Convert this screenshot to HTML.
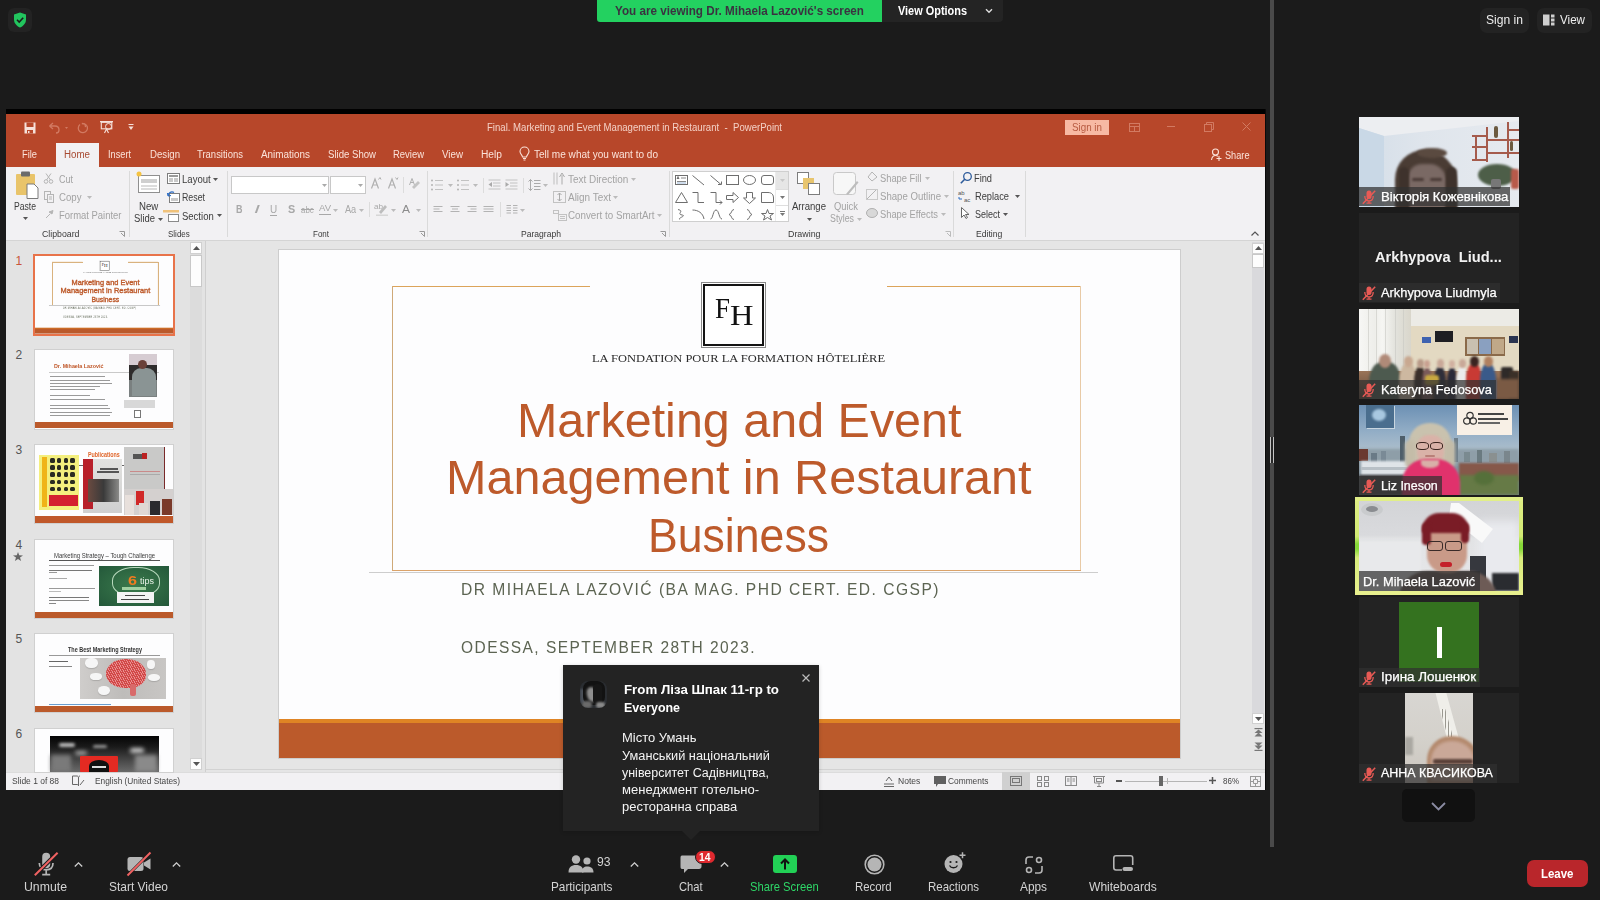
<!DOCTYPE html>
<html><head><meta charset="utf-8">
<style>
*{margin:0;padding:0;box-sizing:border-box}
html,body{width:1600px;height:900px;overflow:hidden;background:#1b1b1b;font-family:"Liberation Sans",sans-serif}
.a{position:absolute}
.t{position:absolute;white-space:nowrap;line-height:1;transform-origin:0 50%}
svg{position:absolute;overflow:visible}
#slclone .t[style*="189, 90, 43"],#slclone .t[style*="#bd5a2b"]{-webkit-text-stroke:2.4px currentColor}
/* ribbon text */
.rb{font-size:10px;color:#3b3b3b}
.rd{font-size:10px;color:#a6a6a6}
.lab{font-size:9.5px;color:#454545}
.sep{position:absolute;width:1px;background:#dcdcdc;top:171px;height:66px}
.tab{font-size:10px;color:#fbe3da}
.zl{font-size:12.5px;color:#d2d2d2}
.nm{font-size:12px;color:#fff}
.tile{position:absolute;left:1359px;width:160px;height:90px;background:#242424;overflow:hidden}
.lbl{position:absolute;left:0;bottom:0;height:19px;background:rgba(30,30,30,.78)}
</style></head><body>
<!-- ===== Zoom top chrome ===== -->
<div class="a" style="left:8px;top:8px;width:24px;height:24px;border-radius:6px;background:#232323"></div>
<svg style="left:13px;top:12px" width="14" height="16" viewBox="0 0 14 16"><path d="M7 0.5 L13 2.6 V7.5 C13 11.3 10.4 14 7 15.5 C3.6 14 1 11.3 1 7.5 V2.6 Z" fill="#22c55e"></path><path d="M4 7.8 L6.2 10 L10.2 5.8" stroke="#1b1b1b" stroke-width="1.6" fill="none"></path></svg>

<div class="a" style="left:597px;top:0;width:285px;height:22px;background:#23d160;border-radius:0 0 0 3px"></div>
<div class="t fit" style="left: 615px; top: 5px; font-size: 12.5px; font-weight: 700; color: rgb(58, 51, 64); --w: 249; transform: scaleX(0.933458);">You are viewing Dr. Mihaela Lazović's screen</div>
<div class="a" style="left:882px;top:0;width:121px;height:22px;background:#242424;border-radius:0 0 4px 0"></div>
<div class="t fit" style="left: 898px; top: 5px; font-size: 12px; font-weight: 700; color: rgb(255, 255, 255); --w: 69; transform: scaleX(0.910328);">View Options</div>
<svg style="left:985px;top:8px" width="8" height="6" viewBox="0 0 8 6"><path d="M1 1.2 L4 4.2 L7 1.2" stroke="#ddd" stroke-width="1.4" fill="none"></path></svg>

<div class="a" style="left:1480px;top:8px;width:49px;height:25px;background:#232323;border-radius:7px"></div>
<div class="t fit" style="left: 1486px; top: 14px; font-size: 12.5px; color: rgb(238, 238, 238); --w: 37; transform: scaleX(0.967716);">Sign in</div>
<div class="a" style="left:1537px;top:8px;width:55px;height:25px;background:#232323;border-radius:7px"></div>
<svg style="left:1543px;top:14px" width="12" height="12" viewBox="0 0 12 12"><rect x="0" y="0.5" width="6.5" height="11" fill="#cfcfcf"></rect><rect x="8" y="0.5" width="3.5" height="3" fill="#cfcfcf"></rect><rect x="8" y="4.5" width="3.5" height="3" fill="#cfcfcf"></rect><rect x="8" y="8.5" width="3.5" height="3" fill="#cfcfcf"></rect></svg>
<div class="t fit" style="left: 1560px; top: 14px; font-size: 12.5px; color: rgb(238, 238, 238); --w: 25; transform: scaleX(0.930233);">View</div>

<div class="a" style="left:1270px;top:0;width:4px;height:847px;background:#4a4a4a"></div>
<div class="a" style="left:1270px;top:437px;width:4px;height:26px;background:#262626;border-left:1px solid #c4c4c4;border-right:1px solid #c4c4c4"></div>
<div class="a" style="left:1265px;top:109px;width:1px;height:681px;background:#0a0a0a"></div>

<!-- ===== PowerPoint window ===== -->
<div class="a" style="left:6px;top:109px;width:1259px;height:5px;background:#000"></div>
<div class="a" style="left:6px;top:114px;width:1259px;height:53px;background:#b7472a"></div>
<div class="a" style="left:6px;top:167px;width:1259px;height:73px;background:#f2f1f3"></div>
<div class="a" style="left:6px;top:240px;width:1259px;height:1px;background:#d4d4d4"></div>
<div class="a" style="left:6px;top:241px;width:199px;height:531px;background:#e3e3e3"></div>
<div class="a" style="left:205px;top:241px;width:1px;height:531px;background:#cfcfcf"></div>
<div class="a" style="left:206px;top:241px;width:1059px;height:531px;background:#e5e5e5"></div>
<div class="a" style="left:6px;top:772px;width:1259px;height:18px;background:#f2f1f3;border-top:1px solid #dcdcdc"></div>

<!-- QAT -->
<svg style="left:24px;top:122px" width="12" height="12" viewBox="0 0 12 12"><rect x="0.5" y="0.5" width="11" height="11" fill="#f6e1da"></rect><rect x="2.5" y="0.5" width="7" height="4.5" fill="#b7472a"></rect><rect x="3" y="8" width="6" height="3.5" fill="#b7472a"></rect><rect x="4" y="9" width="1.5" height="2" fill="#f6e1da"></rect></svg>
<svg style="left:48px;top:122px" width="20" height="12" viewBox="0 0 20 12"><path d="M1.5 4 L5 1 M1.5 4 L5 7 M1.5 4 H7 C10 4 11 6 11 8 C11 10 9.5 11 8 11" stroke="#d27a62" stroke-width="1.3" fill="none"></path><path d="M17 5 L20 5 L18.5 7Z" fill="#d27a62"></path></svg>
<svg style="left:77px;top:122px" width="12" height="12" viewBox="0 0 12 12"><path d="M3 2.5 A4.6 4.6 0 1 0 8 2 M8 2 L8.5 5.2 M8 2 L4.8 1.5" stroke="#d27a62" stroke-width="1.3" fill="none"></path></svg>
<svg style="left:100px;top:121px" width="14" height="13" viewBox="0 0 14 13"><rect x="0" y="0" width="13" height="1.3" fill="#f6e1da"></rect><rect x="1.3" y="1.3" width="10.5" height="6.5" fill="none" stroke="#f6e1da" stroke-width="1.1"></rect><circle cx="8.5" cy="5.5" r="3" fill="none" stroke="#f6e1da" stroke-width="1"></circle><path d="M6.5 8 L4.5 12 M6.5 8 L8.5 12" stroke="#f6e1da" stroke-width="1.1"></path></svg>
<svg style="left:128px;top:124px" width="6" height="7" viewBox="0 0 6 7"><rect x="0.5" y="0" width="5" height="1" fill="#f6e1da"></rect><path d="M0.5 2.5 H5.5 L3 6Z" fill="#f6e1da"></path></svg>
<div class="t fit" style="left: 487px; top: 123px; font-size: 10px; color: rgb(244, 209, 198); --w: 295; transform: scaleX(0.957987);">Final. Marketing and Event Management in Restaurant&nbsp; -&nbsp; PowerPoint</div>
<div class="a" style="left:1065px;top:120px;width:44px;height:15px;background:#f7b9a3"></div>
<div class="t fit" style="left: 1072px; top: 123px; font-size: 10px; color: rgb(183, 90, 64); --w: 30; transform: scaleX(0.981094);">Sign in</div>
<svg style="left:1129px;top:123px" width="11" height="9" viewBox="0 0 11 9"><rect x="0.5" y="0.5" width="10" height="8" fill="none" stroke="#d27a62"></rect><path d="M0.5 3.5 H10.5 M5.5 3.5 V8.5" stroke="#d27a62"></path></svg>
<div class="a" style="left:1167px;top:126px;width:8px;height:1px;background:#d27a62"></div>
<svg style="left:1204px;top:122px" width="10" height="10" viewBox="0 0 10 10"><rect x="0.5" y="2.5" width="7" height="7" fill="none" stroke="#d27a62"></rect><path d="M2.5 2.5 V0.5 H9.5 V7.5 H7.5" stroke="#d27a62" fill="none"></path></svg>
<svg style="left:1242px;top:122px" width="9" height="9" viewBox="0 0 9 9"><path d="M0.5 0.5 L8.5 8.5 M8.5 0.5 L0.5 8.5" stroke="#d27a62"></path></svg>
<!-- tabs -->
<div class="a" style="left:56px;top:143px;width:43px;height:24px;background:#f2f1f3"></div>
<div class="t tab fit" style="left: 22px; top: 150px; --w: 15; transform: scaleX(0.930233);">File</div>
<div class="t tab fit" style="left: 64px; top: 150px; color: rgb(168, 74, 50); --w: 26; transform: scaleX(0.974239);">Home</div>
<div class="t tab fit" style="left: 108px; top: 150px; --w: 23; transform: scaleX(0.919425);">Insert</div>
<div class="t tab fit" style="left: 150px; top: 150px; --w: 30; transform: scaleX(0.963372);">Design</div>
<div class="t tab fit" style="left: 197px; top: 150px; --w: 46; transform: scaleX(0.947538);">Transitions</div>
<div class="t tab fit" style="left: 261px; top: 150px; --w: 49; transform: scaleX(0.990524);">Animations</div>
<div class="t tab fit" style="left: 328px; top: 150px; --w: 48; transform: scaleX(0.9594);">Slide Show</div>
<div class="t tab fit" style="left: 393px; top: 150px; --w: 31; transform: scaleX(0.945212);">Review</div>
<div class="t tab fit" style="left: 442px; top: 150px; --w: 21; transform: scaleX(0.976744);">View</div>
<div class="t tab fit" style="left: 481px; top: 150px; --w: 21; transform: scaleX(1.0205);">Help</div>
<svg style="left:519px;top:147px" width="11" height="14" viewBox="0 0 11 14"><path d="M3.5 10 C3.5 8 1 7 1 4.5 A4.5 4.5 0 0 1 10 4.5 C10 7 7.5 8 7.5 10 Z" fill="none" stroke="#fbe3da" stroke-width="1.1"></path><path d="M4 11.5 H7 M4.5 13 H6.5" stroke="#fbe3da"></path></svg>
<div class="t tab fit" style="left: 534px; top: 150px; --w: 124; transform: scaleX(1.00481);">Tell me what you want to do</div>
<svg style="left:1211px;top:148px" width="11" height="13" viewBox="0 0 11 13"><circle cx="4.5" cy="4" r="3" fill="none" stroke="#fbe3da" stroke-width="1.1"></circle><path d="M0.5 12 C1 8.5 3 7.5 4.5 7.5 C5.5 7.5 6.3 7.8 7 8.2" fill="none" stroke="#fbe3da" stroke-width="1.1"></path><path d="M8 8 V13 M5.5 10.5 H10.5" stroke="#fbe3da" stroke-width="1.1"></path></svg>
<div class="t tab fit" style="left: 1225px; top: 151px; --w: 24.5; transform: scaleX(0.918033);">Share</div>

<!--RIBBON-->
<div class="a" style="left:129px;top:171px;width:1px;height:66px;background:#dadada;"></div>
<div class="a" style="left:227px;top:171px;width:1px;height:66px;background:#dadada;"></div>
<div class="a" style="left:427px;top:171px;width:1px;height:66px;background:#dadada;"></div>
<div class="a" style="left:669px;top:171px;width:1px;height:66px;background:#dadada;"></div>
<div class="a" style="left:953px;top:171px;width:1px;height:66px;background:#dadada;"></div>
<div class="a" style="left:1025px;top:171px;width:1px;height:66px;background:#dadada;"></div>
<svg style="left:15px;top:171px" width="24" height="28" viewBox="0 0 24 28"><rect x="1" y="3" width="19" height="21" rx="1" fill="#e9c46a"></rect><rect x="6" y="0.5" width="9" height="5" rx="1" fill="#6b6b6b"></rect><path d="M12 13 H19 L23 17 V27.5 H12Z" fill="#fff" stroke="#7a7a7a" stroke-width="1"></path></svg>
<div class="t fit" style="left: 14px; top: 201.84px; font-size: 10px; color: rgb(60, 60, 60); --w: 22; transform: scaleX(0.86011);">Paste</div>
<svg style="left:22.5px;top:216.5px" width="5" height="3" viewBox="0 0 5 3"><path d="M0 0 H5 L2.5 3Z" fill="#555"></path></svg>
<svg style="left:44px;top:173px" width="9" height="11" viewBox="0 0 9 11"><circle cx="2" cy="8.5" r="1.8" fill="none" stroke="#b5b5b5"></circle><circle cx="7" cy="8.5" r="1.8" fill="none" stroke="#b5b5b5"></circle><path d="M2.5 7 L7 0.5 M6.5 7 L2 0.5" stroke="#b5b5b5"></path></svg>
<div class="t fit" style="left: 58.5px; top: 174.84px; font-size: 10px; color: rgb(163, 163, 163); --w: 14; transform: scaleX(0.899598);">Cut</div>
<svg style="left:44px;top:191px" width="10" height="12" viewBox="0 0 10 12"><rect x="0.5" y="0.5" width="6" height="8" fill="none" stroke="#b5b5b5"></rect><rect x="3.5" y="3.5" width="6" height="8" fill="#f2f1f3" stroke="#b5b5b5"></rect><path d="M5 6 H8 M5 8 H8" stroke="#b5b5b5"></path></svg>
<div class="t fit" style="left: 58.5px; top: 192.84px; font-size: 10px; color: rgb(163, 163, 163); --w: 22.5; transform: scaleX(0.963211);">Copy</div>
<svg style="left:86.5px;top:195.5px" width="5" height="3" viewBox="0 0 5 3"><path d="M0 0 H5 L2.5 3Z" fill="#bbb"></path></svg>
<svg style="left:45px;top:210px" width="9" height="9" viewBox="0 0 9 9"><path d="M1 8 L5 4 M4 2 L8 0.5 L7 4 Z" stroke="#b5b5b5" fill="#b5b5b5"></path></svg>
<div class="t fit" style="left: 58.5px; top: 211.34px; font-size: 10px; color: rgb(163, 163, 163); --w: 62.5; transform: scaleX(0.944956);">Format Painter</div>
<div class="t fit" style="left: 41.5px; top: 229.98px; font-size: 9px; color: rgb(58, 58, 58); --w: 37.5; transform: scaleX(0.973236);">Clipboard</div>
<svg style="left:119px;top:231px" width="6" height="6" viewBox="0 0 6 6"><path d="M0.5 0.5 H5.5 V5.5 M5.5 5.5 L2 2" stroke="#999" fill="none"></path></svg>
<svg style="left:136px;top:171px" width="25" height="23" viewBox="0 0 25 23"><rect x="2.5" y="4.5" width="21" height="17" fill="#fff" stroke="#8f8f8f"></rect><rect x="5" y="8" width="16" height="4" fill="#cfcfcf"></rect><path d="M5 15 H21 M5 18 H21" stroke="#b9b9b9"></path><circle cx="3" cy="3" r="2.5" fill="#f5c342"></circle></svg>
<div class="t fit" style="left: 138.7px; top: 201.84px; font-size: 10px; color: rgb(60, 60, 60); --w: 19.3; transform: scaleX(0.964247);">New</div>
<div class="t fit" style="left: 134px; top: 214.34px; font-size: 10px; color: rgb(60, 60, 60); --w: 21; transform: scaleX(0.94382);">Slide</div>
<svg style="left:158.0px;top:217.5px" width="5" height="3" viewBox="0 0 5 3"><path d="M0 0 H5 L2.5 3Z" fill="#555"></path></svg>
<svg style="left:167px;top:173px" width="13" height="11" viewBox="0 0 13 11"><rect x="0.5" y="0.5" width="12" height="10" fill="#fff" stroke="#7d7d7d"></rect><rect x="2" y="2" width="9" height="2" fill="#9a9a9a"></rect><rect x="2" y="5" width="4" height="4" fill="#c9c9c9"></rect><rect x="7" y="5" width="4" height="4" fill="#c9c9c9"></rect></svg>
<div class="t fit" style="left: 182px; top: 174.84px; font-size: 10px; color: rgb(60, 60, 60); --w: 28.7; transform: scaleX(0.955671);">Layout</div>
<svg style="left:212.5px;top:177.5px" width="5" height="3" viewBox="0 0 5 3"><path d="M0 0 H5 L2.5 3Z" fill="#555"></path></svg>
<svg style="left:167px;top:191px" width="13" height="12" viewBox="0 0 13 12"><rect x="2.5" y="2.5" width="10" height="9" fill="#fff" stroke="#7d7d7d"></rect><rect x="4" y="7" width="7" height="3" fill="#c9c9c9"></rect><path d="M1 5 A4 4 0 0 1 7 1.5 M1 5 L0.5 2 M1 5 L4 4.5" stroke="#2b6cc4" stroke-width="1.2" fill="none"></path></svg>
<div class="t fit" style="left: 182px; top: 193.14px; font-size: 10px; color: rgb(60, 60, 60); --w: 23; transform: scaleX(0.880383);">Reset</div>
<svg style="left:163px;top:209px" width="17" height="13" viewBox="0 0 17 13"><rect x="0" y="1" width="16" height="2.5" fill="#f0c27a"></rect><rect x="5.5" y="5.5" width="10" height="7" fill="#fff" stroke="#8a8a8a"></rect></svg>
<div class="t fit" style="left: 182px; top: 211.53px; font-size: 10px; color: rgb(60, 60, 60); --w: 31.7; transform: scaleX(0.950258);">Section</div>
<svg style="left:216.5px;top:213.5px" width="5" height="3" viewBox="0 0 5 3"><path d="M0 0 H5 L2.5 3Z" fill="#555"></path></svg>
<div class="t fit" style="left: 167.5px; top: 229.98px; font-size: 9px; color: rgb(58, 58, 58); --w: 21.8; transform: scaleX(0.889229);">Slides</div>
<div class="a" style="left:231px;top:176px;width:98px;height:18px;background:#fff;border:1px solid #c8c8c8"></div>
<div class="a" style="left:330px;top:176px;width:36px;height:18px;background:#fff;border:1px solid #c8c8c8"></div>
<svg style="left:322.0px;top:183.5px" width="5" height="3" viewBox="0 0 5 3"><path d="M0 0 H5 L2.5 3Z" fill="#aaa"></path></svg>
<svg style="left:358.0px;top:183.5px" width="5" height="3" viewBox="0 0 5 3"><path d="M0 0 H5 L2.5 3Z" fill="#aaa"></path></svg>
<svg style="left:371px;top:177px" width="10" height="12" viewBox="0 0 10 12"><path d="M0.5 11.5 L4 2 L7.5 11.5 M2 8 H6" stroke="#b0b0b0" stroke-width="1.2" fill="none"></path><path d="M7.5 2.5 L9 0.5 L10 2.5" stroke="#b0b0b0" fill="none"></path></svg>
<svg style="left:388px;top:177px" width="10" height="12" viewBox="0 0 10 12"><path d="M0.5 11.5 L4 2 L7.5 11.5 M2 8 H6" stroke="#b0b0b0" stroke-width="1.2" fill="none"></path><path d="M7.5 0.5 L9 2.5 L10 0.5" stroke="#b0b0b0" fill="none"></path></svg>
<div class="a" style="left:403px;top:177px;width:1px;height:16px;background:#dcdcdc;"></div>
<svg style="left:409px;top:178px" width="12" height="12" viewBox="0 0 12 12"><path d="M0.5 7 L3 0.5 L5.5 7 M1.5 4.5 H4.5" stroke="#b0b0b0" fill="none"></path><path d="M5 11 L11 5 L9 3 L3 9Z" fill="#c4c4c4"></path></svg>
<div class="t fit" style="left: 235.7px; top: 205.34px; font-size: 10px; color: rgb(168, 168, 168); font-weight: 700; --w: 6.5; transform: scaleX(0.898488);">B</div>
<div class="t fit" style="left: 253.5px; top: 205.34px; font-size: 10px; color: rgb(168, 168, 168); --w: 6; font-style: italic; transform: scaleX(2.1573);">I</div>
<div class="t fit" style="left: 269.5px; top: 205.34px; font-size: 10px; color: rgb(168, 168, 168); --w: 7.2; transform: scaleX(0.995248);">U</div>
<div class="a" style="left:269.5px;top:215px;width:7.5px;height:1px;background:#a8a8a8;"></div>
<div class="t fit" style="left: 287.5px; top: 205.34px; font-size: 10px; color: rgb(168, 168, 168); font-weight: 700; --w: 7.2; transform: scaleX(1.07916);">S</div>
<div class="t fit" style="left: 301px; top: 206.18px; font-size: 9px; color: rgb(168, 168, 168); --w: 12.7; transform: scaleX(0.874919);">abc</div>
<div class="a" style="left:301px;top:209px;width:13px;height:1px;background:#a8a8a8;"></div>
<div class="t fit" style="left: 319px; top: 204.18px; font-size: 9px; color: rgb(168, 168, 168); --w: 12; transform: scaleX(1.05785);">AV</div>
<div class="a" style="left:319px;top:214px;width:12px;height:1px;background:#a8a8a8;"></div>
<svg style="left:333.0px;top:208.5px" width="5" height="3" viewBox="0 0 5 3"><path d="M0 0 H5 L2.5 3Z" fill="#bbb"></path></svg>
<div class="t fit" style="left: 344.5px; top: 205.34px; font-size: 10px; color: rgb(168, 168, 168); --w: 11.2; transform: scaleX(0.915453);">Aa</div>
<svg style="left:358.5px;top:208.5px" width="5" height="3" viewBox="0 0 5 3"><path d="M0 0 H5 L2.5 3Z" fill="#bbb"></path></svg>
<div class="a" style="left:368.5px;top:202px;width:1px;height:15px;background:#dcdcdc;"></div>
<div class="t fit" style="left: 373.5px; top: 203.03px; font-size: 8px; color: rgb(168, 168, 168); --w: 9; transform: scaleX(1.01053);">ab</div>
<svg style="left:376px;top:203px" width="12" height="13" viewBox="0 0 12 13"><path d="M3 9 L9 2 L11 4 L5 11Z" fill="#bdbdbd"></path><rect x="0" y="11.5" width="12" height="1.5" fill="#d6d6d6"></rect></svg>
<svg style="left:390.5px;top:208.5px" width="5" height="3" viewBox="0 0 5 3"><path d="M0 0 H5 L2.5 3Z" fill="#bbb"></path></svg>
<div class="t fit" style="left: 401.8px; top: 203.99px; font-size: 11px; color: rgb(140, 140, 140); --w: 8; transform: scaleX(1.08936);">A</div>
<svg style="left:415.5px;top:208.5px" width="5" height="3" viewBox="0 0 5 3"><path d="M0 0 H5 L2.5 3Z" fill="#bbb"></path></svg>
<div class="t fit" style="left: 312.7px; top: 229.98px; font-size: 9px; color: rgb(58, 58, 58); --w: 16; transform: scaleX(0.888118);">Font</div>
<svg style="left:419px;top:231px" width="6" height="6" viewBox="0 0 6 6"><path d="M0.5 0.5 H5.5 V5.5 M5.5 5.5 L2 2" stroke="#999" fill="none"></path></svg>
<svg style="left:431px;top:179px" width="13" height="12" viewBox="0 0 13 12"><circle cx="1" cy="1.5" r="1" fill="#b3b3b3"></circle><circle cx="1" cy="6" r="1" fill="#b3b3b3"></circle><circle cx="1" cy="10.5" r="1" fill="#b3b3b3"></circle><path d="M4 1.5 H12 M4 6 H12 M4 10.5 H12" stroke="#c2c2c2"></path></svg>
<svg style="left:447.5px;top:183.5px" width="5" height="3" viewBox="0 0 5 3"><path d="M0 0 H5 L2.5 3Z" fill="#bbb"></path></svg>
<svg style="left:457px;top:179px" width="13" height="12" viewBox="0 0 13 12"><circle cx="1" cy="1.5" r="1" fill="#b3b3b3"></circle><circle cx="1" cy="6" r="1" fill="#b3b3b3"></circle><circle cx="1" cy="10.5" r="1" fill="#b3b3b3"></circle><path d="M4 1.5 H12 M4 6 H12 M4 10.5 H12" stroke="#c2c2c2"></path></svg>
<svg style="left:473.0px;top:183.5px" width="5" height="3" viewBox="0 0 5 3"><path d="M0 0 H5 L2.5 3Z" fill="#bbb"></path></svg>
<div class="a" style="left:483px;top:178px;width:1px;height:15px;background:#dcdcdc;"></div>
<svg style="left:488px;top:179px" width="13" height="11" viewBox="0 0 13 11"><path d="M0.5 1 H12.5 M5 4 H12.5 M5 7 H12.5 M0.5 10 H12.5" stroke="#c2c2c2"></path><path d="M0.5 5.5 L4 3 V8Z" fill="#aaa"></path></svg>
<svg style="left:505px;top:179px" width="13" height="11" viewBox="0 0 13 11"><path d="M0.5 1 H12.5 M5 4 H12.5 M5 7 H12.5 M0.5 10 H12.5" stroke="#c2c2c2"></path><path d="M4 5.5 L0.5 3 V8Z" fill="#aaa"></path></svg>
<div class="a" style="left:523px;top:178px;width:1px;height:15px;background:#dcdcdc;"></div>
<svg style="left:528px;top:179px" width="13" height="12" viewBox="0 0 13 12"><path d="M2.5 0.5 V11.5 M0.5 2.5 L2.5 0.5 L4.5 2.5 M0.5 9.5 L2.5 11.5 L4.5 9.5 M6 1.5 H12.5 M6 4.5 H12.5 M6 7.5 H12.5 M6 10.5 H12.5" stroke="#aaa" fill="none"></path></svg>
<svg style="left:543.0px;top:183.5px" width="5" height="3" viewBox="0 0 5 3"><path d="M0 0 H5 L2.5 3Z" fill="#bbb"></path></svg>
<svg style="left:553px;top:172px" width="13" height="13" viewBox="0 0 13 13"><path d="M1 0.5 V12.5 M4 0.5 V12.5" stroke="#bdbdbd"></path><path d="M9 12.5 V3 M6.5 5 L9 1 L11.5 5" stroke="#aaa" fill="none"></path></svg>
<div class="t fit" style="left: 568px; top: 174.84px; font-size: 10px; color: rgb(163, 163, 163); --w: 60.2; transform: scaleX(0.993758);">Text Direction</div>
<svg style="left:630.5px;top:177.5px" width="5" height="3" viewBox="0 0 5 3"><path d="M0 0 H5 L2.5 3Z" fill="#bbb"></path></svg>
<svg style="left:553px;top:191px" width="13" height="12" viewBox="0 0 13 12"><rect x="0.5" y="0.5" width="12" height="11" fill="none" stroke="#c2c2c2"></rect><path d="M6.5 2 V10 M4.5 4 L6.5 2 L8.5 4 M4.5 8 L6.5 10 L8.5 8" stroke="#aaa" fill="none"></path></svg>
<div class="t fit" style="left: 568px; top: 192.84px; font-size: 10px; color: rgb(163, 163, 163); --w: 43; transform: scaleX(0.995658);">Align Text</div>
<svg style="left:613.0px;top:195.5px" width="5" height="3" viewBox="0 0 5 3"><path d="M0 0 H5 L2.5 3Z" fill="#bbb"></path></svg>
<svg style="left:553px;top:210px" width="14" height="11" viewBox="0 0 14 11"><rect x="0.5" y="0.5" width="5" height="3" fill="none" stroke="#c2c2c2"></rect><rect x="5.5" y="4.5" width="8" height="6" fill="none" stroke="#c2c2c2"></rect><path d="M7 6.5 H12 M7 8.5 H12" stroke="#c2c2c2"></path></svg>
<div class="t fit" style="left: 568px; top: 211.34px; font-size: 10px; color: rgb(163, 163, 163); --w: 86.5; transform: scaleX(0.978957);">Convert to SmartArt</div>
<svg style="left:656.5px;top:213.5px" width="5" height="3" viewBox="0 0 5 3"><path d="M0 0 H5 L2.5 3Z" fill="#bbb"></path></svg>
<svg style="left:432.5px;top:206px" width="11" height="7" viewBox="0 0 11 7"><path d="M0.5 0.5 H9.5 M0.5 3 H6.5 M0.5 5.5 H9.5" stroke="#b3b3b3"></path></svg>
<svg style="left:449.5px;top:206px" width="11" height="7" viewBox="0 0 11 7"><path d="M0.5 0.5 H9.5 M2 3 H8 M0.5 5.5 H9.5" stroke="#b3b3b3"></path></svg>
<svg style="left:467px;top:206px" width="11" height="7" viewBox="0 0 11 7"><path d="M0.5 0.5 H9.5 M3.5 3 H9.5 M0.5 5.5 H9.5" stroke="#b3b3b3"></path></svg>
<svg style="left:483px;top:206px" width="11" height="7" viewBox="0 0 11 7"><path d="M0.5 0.5 H10.5 M0.5 3 H10.5 M0.5 5.5 H10.5" stroke="#b3b3b3"></path></svg>
<div class="a" style="left:500px;top:202px;width:1px;height:15px;background:#dcdcdc;"></div>
<svg style="left:505.5px;top:205px" width="12" height="9" viewBox="0 0 12 9"><path d="M0.5 0.5 H5 M0.5 3 H5 M0.5 5.5 H5 M0.5 8 H5 M7 0.5 H11.5 M7 3 H11.5 M7 5.5 H11.5 M7 8 H11.5" stroke="#b3b3b3"></path></svg>
<svg style="left:520.0px;top:208.5px" width="5" height="3" viewBox="0 0 5 3"><path d="M0 0 H5 L2.5 3Z" fill="#bbb"></path></svg>
<div class="t fit" style="left: 520.7px; top: 229.98px; font-size: 9px; color: rgb(58, 58, 58); --w: 40; transform: scaleX(0.951673);">Paragraph</div>
<svg style="left:660px;top:231px" width="6" height="6" viewBox="0 0 6 6"><path d="M0.5 0.5 H5.5 V5.5 M5.5 5.5 L2 2" stroke="#999" fill="none"></path></svg>
<div class="a" style="left:672px;top:171px;width:117px;height:51px;background:#fff;border:1px solid #cfcfcf"></div>
<div class="a" style="left:776px;top:172px;width:12px;height:17px;background:#e6e6e6;"></div>
<div class="a" style="left:776px;top:189px;width:12px;height:1px;background:#dedede;"></div>
<div class="a" style="left:776px;top:205px;width:12px;height:1px;background:#dedede;"></div>
<div class="a" style="left:775px;top:172px;width:1px;height:49px;background:#ececec;"></div>
<svg style="left:779.5px;top:178.5px" width="5" height="3" viewBox="0 0 5 3"><path d="M0 0 H5 L2.5 3Z" fill="#c8c8c8"></path></svg>
<svg style="left:779.5px;top:195.5px" width="5" height="3" viewBox="0 0 5 3"><path d="M0 0 H5 L2.5 3Z" fill="#777"></path></svg>
<div class="a" style="left:779.5px;top:211px;width:5px;height:1px;background:#777;"></div>
<svg style="left:779.5px;top:212.5px" width="5" height="3" viewBox="0 0 5 3"><path d="M0 0 H5 L2.5 3Z" fill="#777"></path></svg>
<svg style="left:675px;top:175px" width="13" height="12" viewBox="0 0 13 12"><rect x="0.5" y="0.5" width="12" height="9" fill="none" stroke="#6e6e6e"></rect><path d="M2 4 L3 1.5 L4 4 M6 3 H11 M2 6.5 H11" stroke="#888"></path><path d="M2 8 H11" stroke="#9db8d8"></path></svg>
<svg style="left:692px;top:175px" width="13" height="12" viewBox="0 0 13 12"><path d="M0.5 0.5 L12 10" stroke="#6e6e6e"></path></svg>
<svg style="left:710px;top:175px" width="13" height="12" viewBox="0 0 13 12"><path d="M0.5 0.5 L11 9.5 M8 9.5 H11.5 V6.5" stroke="#6e6e6e" fill="none"></path></svg>
<svg style="left:726px;top:175px" width="13" height="12" viewBox="0 0 13 12"><rect x="0.5" y="0.5" width="12" height="9" fill="none" stroke="#6e6e6e"></rect></svg>
<svg style="left:743px;top:175px" width="13" height="12" viewBox="0 0 13 12"><ellipse cx="6.5" cy="5" rx="6" ry="4.5" fill="none" stroke="#6e6e6e"></ellipse></svg>
<svg style="left:761px;top:175px" width="13" height="12" viewBox="0 0 13 12"><rect x="0.5" y="0.5" width="12" height="9" rx="2.5" fill="none" stroke="#6e6e6e"></rect></svg>
<svg style="left:675px;top:192px" width="13" height="12" viewBox="0 0 13 12"><path d="M6.5 0.5 L12.5 10.5 H0.5Z" fill="none" stroke="#6e6e6e"></path></svg>
<svg style="left:692px;top:192px" width="13" height="12" viewBox="0 0 13 12"><path d="M0.5 0.5 H6 V10.5 H12" stroke="#6e6e6e" fill="none"></path></svg>
<svg style="left:710px;top:192px" width="13" height="12" viewBox="0 0 13 12"><path d="M0.5 0.5 H6 V10.5 H12 M10 8.5 L12 10.5 L10 12.5" stroke="#6e6e6e" fill="none"></path></svg>
<svg style="left:726px;top:192px" width="13" height="12" viewBox="0 0 13 12"><path d="M0.5 3.5 H7 V0.5 L12.5 5.5 L7 10.5 V7.5 H0.5Z" fill="none" stroke="#6e6e6e"></path></svg>
<svg style="left:743px;top:192px" width="13" height="12" viewBox="0 0 13 12"><path d="M3.5 0.5 H9.5 V6 H12.5 L6.5 11.5 L0.5 6 H3.5Z" fill="none" stroke="#6e6e6e"></path></svg>
<svg style="left:761px;top:192px" width="13" height="12" viewBox="0 0 13 12"><path d="M0.5 0.5 H7 C11 0.5 12.5 3 12.5 6 V10.5 H0.5Z" fill="none" stroke="#6e6e6e"></path></svg>
<svg style="left:675px;top:209px" width="13" height="12" viewBox="0 0 13 12"><path d="M3 0.5 C10 2 1 5 7 6 C12 7 2 9 5 10.5" stroke="#6e6e6e" fill="none"></path></svg>
<svg style="left:692px;top:209px" width="13" height="12" viewBox="0 0 13 12"><path d="M0.5 1 C6 1 11 4 12 10" stroke="#6e6e6e" fill="none"></path></svg>
<svg style="left:710px;top:209px" width="13" height="12" viewBox="0 0 13 12"><path d="M0.5 10 C3 10 3 1 6 1 C9 1 9 10 12 10" stroke="#6e6e6e" fill="none"></path></svg>
<svg style="left:727px;top:209px" width="13" height="12" viewBox="0 0 13 12"><path d="M7 0.5 C4 0.5 5 5 2 5.5 C5 6 4 10.5 7 10.5" stroke="#6e6e6e" fill="none"></path></svg>
<svg style="left:744px;top:209px" width="13" height="12" viewBox="0 0 13 12"><path d="M3 0.5 C6 0.5 5 5 8 5.5 C5 6 6 10.5 3 10.5" stroke="#6e6e6e" fill="none"></path></svg>
<svg style="left:761px;top:209px" width="13" height="12" viewBox="0 0 13 12"><path d="M6.5 0.5 L8 4.5 L12.5 4.5 L9 7 L10.5 11 L6.5 8.5 L2.5 11 L4 7 L0.5 4.5 L5 4.5Z" fill="none" stroke="#6e6e6e"></path></svg>
<svg style="left:797px;top:172px" width="24" height="24" viewBox="0 0 24 24"><rect x="0.5" y="0.5" width="11" height="11" fill="#fff" stroke="#7d7d7d"></rect><rect x="6" y="6" width="11" height="11" fill="#e8c56e"></rect><rect x="11.5" y="11.5" width="11" height="11" fill="#fff" stroke="#7d7d7d"></rect></svg>
<div class="t fit" style="left: 792px; top: 201.84px; font-size: 10px; color: rgb(60, 60, 60); --w: 34; transform: scaleX(0.955643);">Arrange</div>
<svg style="left:807.0px;top:217.5px" width="5" height="3" viewBox="0 0 5 3"><path d="M0 0 H5 L2.5 3Z" fill="#555"></path></svg>
<svg style="left:833px;top:172px" width="26" height="26" viewBox="0 0 26 26"><rect x="0.5" y="0.5" width="22" height="22" rx="3" fill="#f7f7f7" stroke="#c9c9c9"></rect><path d="M13 22 L24 9 L25.5 10.5 L15 23Z" fill="#bdbdbd"></path></svg>
<div class="t fit" style="left: 833.6px; top: 201.84px; font-size: 10px; color: rgb(163, 163, 163); --w: 24; transform: scaleX(0.938875);">Quick</div>
<div class="t fit" style="left: 830px; top: 214.34px; font-size: 10px; color: rgb(163, 163, 163); --w: 24; transform: scaleX(0.881239);">Styles</div>
<svg style="left:856.5px;top:217.5px" width="5" height="3" viewBox="0 0 5 3"><path d="M0 0 H5 L2.5 3Z" fill="#bbb"></path></svg>
<svg style="left:866px;top:171px" width="12" height="11" viewBox="0 0 12 11"><path d="M2 6 L6 1 L11 6 L6 10Z" fill="none" stroke="#b5b5b5"></path></svg>
<div class="t fit" style="left: 880px; top: 173.94px; font-size: 10px; color: rgb(163, 163, 163); --w: 41.5; transform: scaleX(0.93324);">Shape Fill</div>
<svg style="left:924.5px;top:176.5px" width="5" height="3" viewBox="0 0 5 3"><path d="M0 0 H5 L2.5 3Z" fill="#bbb"></path></svg>
<svg style="left:866px;top:189px" width="12" height="11" viewBox="0 0 12 11"><path d="M1 10 L10 1" stroke="#b5b5b5"></path><rect x="0.5" y="0.5" width="11" height="10" fill="none" stroke="#c9c9c9"></rect></svg>
<div class="t fit" style="left: 880px; top: 191.94px; font-size: 10px; color: rgb(163, 163, 163); --w: 61; transform: scaleX(0.962287);">Shape Outline</div>
<svg style="left:943.5px;top:194.5px" width="5" height="3" viewBox="0 0 5 3"><path d="M0 0 H5 L2.5 3Z" fill="#bbb"></path></svg>
<svg style="left:866px;top:208px" width="12" height="10" viewBox="0 0 12 10"><ellipse cx="6" cy="5" rx="5.5" ry="4.5" fill="#d8d8d8" stroke="#b0b0b0"></ellipse></svg>
<div class="t fit" style="left: 880px; top: 209.74px; font-size: 10px; color: rgb(163, 163, 163); --w: 58; transform: scaleX(0.934071);">Shape Effects</div>
<svg style="left:940.5px;top:212.5px" width="5" height="3" viewBox="0 0 5 3"><path d="M0 0 H5 L2.5 3Z" fill="#bbb"></path></svg>
<div class="t fit" style="left: 788px; top: 229.98px; font-size: 9px; color: rgb(58, 58, 58); --w: 32.5; transform: scaleX(0.984382);">Drawing</div>
<svg style="left:945px;top:231px" width="6" height="6" viewBox="0 0 6 6"><path d="M0.5 0.5 H5.5 V5.5 M5.5 5.5 L2 2" stroke="#bbb" fill="none"></path></svg>
<svg style="left:960px;top:172px" width="12" height="12" viewBox="0 0 12 12"><circle cx="7.5" cy="4.5" r="3.8" fill="none" stroke="#2d5b9b" stroke-width="1.3"></circle><path d="M5 7 L0.8 11.2" stroke="#2d5b9b" stroke-width="1.6"></path></svg>
<div class="t fit" style="left: 974px; top: 173.94px; font-size: 10px; color: rgb(60, 60, 60); --w: 18; transform: scaleX(0.925301);">Find</div>
<svg style="left:958px;top:190px" width="14" height="12" viewBox="0 0 14 12"><text x="0" y="5" font-size="6" fill="#555" font-family="Liberation Sans">ab</text><text x="6" y="11.5" font-size="6" fill="#555" font-family="Liberation Sans">ac</text><path d="M1 7 V9 H4" stroke="#2b6cc4" fill="none"></path></svg>
<div class="t fit" style="left: 974.6px; top: 191.94px; font-size: 10px; color: rgb(60, 60, 60); --w: 34; transform: scaleX(0.926352);">Replace</div>
<svg style="left:1014.5px;top:194.5px" width="5" height="3" viewBox="0 0 5 3"><path d="M0 0 H5 L2.5 3Z" fill="#555"></path></svg>
<svg style="left:961px;top:207px" width="9" height="12" viewBox="0 0 9 12"><path d="M0.5 0.5 V10.5 L3 8 L5 11.5 L6.5 10.5 L4.5 7.5 H8Z" fill="#fff" stroke="#666"></path></svg>
<div class="t fit" style="left: 974.6px; top: 209.94px; font-size: 10px; color: rgb(60, 60, 60); --w: 25; transform: scaleX(0.899382);">Select</div>
<svg style="left:1002.5px;top:212.5px" width="5" height="3" viewBox="0 0 5 3"><path d="M0 0 H5 L2.5 3Z" fill="#555"></path></svg>
<div class="t fit" style="left: 976.4px; top: 229.98px; font-size: 9px; color: rgb(58, 58, 58); --w: 26.4; transform: scaleX(0.95891);">Editing</div>
<svg style="left:1251px;top:231px" width="8" height="5" viewBox="0 0 8 5"><path d="M0.5 4.5 L4 1 L7.5 4.5" stroke="#555" stroke-width="1.2" fill="none"></path></svg>
<!--/RIBBON-->
<!--BODY-->
<div id="mslide" class="a" style="left:278px;top:249px;width:903px;height:510px;background:#fdfdfe;border:1px solid #cdcdcd"></div>
<div id="slide" class="a" style="left:279px;top:250px;width:901px;height:508px;overflow:hidden">
<div class="a" style="left:113px;top:36px;width:198px;height:1px;background:#dca45a;"></div>
<div class="a" style="left:608px;top:36px;width:194px;height:1px;background:#dca45a;"></div>
<div class="a" style="left:113px;top:36px;width:1px;height:285px;background:#cfa978;"></div>
<div class="a" style="left:801px;top:36px;width:1px;height:285px;background:#e8caa6;"></div>
<div class="a" style="left:113px;top:320px;width:689px;height:1px;background:#dba36a;"></div>
<div class="a" style="left:90px;top:322px;width:729px;height:1px;background:#cdcdcd;"></div>
<div class="a" style="left:422px;top:32px;width:65px;height:66px;background:#fff;border:1.5px solid #8a8a8a"></div>
<div class="a" style="left:424px;top:34px;width:61px;height:62px;background:transparent;border:2px solid #141414"></div>
<div class="t fit" style="left: 435.5px; top: 43.41px; font-size: 30px; color: rgb(17, 17, 17); font-family: &quot;Liberation Serif&quot;, serif; --w: 15; transform: scaleX(0.898876);">F</div>
<div class="t fit" style="left: 451px; top: 50.11px; font-size: 30px; color: rgb(17, 17, 17); font-family: &quot;Liberation Serif&quot;, serif; --w: 23.5; transform: scaleX(1.08435);">H</div>
<div class="t fit" style="left: 313px; top: 103.43px; font-size: 11.3px; color: rgb(42, 42, 42); font-family: &quot;Liberation Serif&quot;, serif; --w: 293; transform: scaleX(1.10235);">LA FONDATION POUR LA FORMATION HÔTELIÈRE</div>
<div class="t fit" style="left: 237.5px; top: 145.98px; font-size: 48.7px; color: rgb(189, 90, 43); --w: 444.5; transform: scaleX(0.995381);">Marketing and Event</div>
<div class="t fit" style="left: 167px; top: 203.08px; font-size: 48.7px; color: rgb(189, 90, 43); --w: 585.6; transform: scaleX(0.997111);">Management in Restaurant</div>
<div class="t fit" style="left: 369.2px; top: 260.78px; font-size: 48.7px; color: rgb(189, 90, 43); --w: 181; transform: scaleX(0.916166);">Business</div>
<div class="t fit" style="left: 182px; top: 331.01px; font-size: 17px; color: rgb(92, 100, 82); --w: 479; letter-spacing: 1.6px; transform: scaleX(0.918147);">DR MIHAELA LAZOVIĆ (BA MAG. PHD CERT. ED. CGSP)</div>
<div class="t fit" style="left: 182px; top: 388.61px; font-size: 17px; color: rgb(92, 100, 82); --w: 295; letter-spacing: 1.6px; transform: scaleX(0.911857);">ODESSA, SEPTEMBER 28TH 2023.</div>
<div class="a" style="left:0px;top:469px;width:901px;height:39px;background:#bb5a2b;"></div>
<div class="a" style="left:0px;top:469px;width:901px;height:4px;background:#df8424;"></div>
</div>
<div class="t" style="left:15.5px;top:254.84px;font-size:12px;color:#c9553a;">1</div>
<div class="t" style="left:15.5px;top:348.84px;font-size:12px;color:#555;">2</div>
<div class="t" style="left:15.5px;top:443.84px;font-size:12px;color:#555;">3</div>
<div class="t" style="left:15.5px;top:538.84px;font-size:12px;color:#555;">4</div>
<div class="t" style="left:15.5px;top:632.84px;font-size:12px;color:#555;">5</div>
<div class="t" style="left:15.5px;top:727.84px;font-size:12px;color:#555;">6</div>
<div class="a" style="left:33px;top:254px;width:142px;height:82px;background:transparent;border:2px solid #e8734a"></div>
<div id="th1" class="a" style="left:35px;top:256px;width:138px;height:78px;overflow:hidden;background:#fdfdfe"><div id="slclone" class="a" style="left: 0px; top: 0px; width: 901px; height: 508px; overflow: hidden; transform-origin: 0px 0px; transform: scale(0.153163);">
<div class="a" style="left:113px;top:36px;width:198px;height:1px;background:#dca45a;"></div>
<div class="a" style="left:608px;top:36px;width:194px;height:1px;background:#dca45a;"></div>
<div class="a" style="left:113px;top:36px;width:1px;height:285px;background:#cfa978;"></div>
<div class="a" style="left:801px;top:36px;width:1px;height:285px;background:#e8caa6;"></div>
<div class="a" style="left:113px;top:320px;width:689px;height:1px;background:#dba36a;"></div>
<div class="a" style="left:90px;top:322px;width:729px;height:1px;background:#cdcdcd;"></div>
<div class="a" style="left:422px;top:32px;width:65px;height:66px;background:#fff;border:1.5px solid #8a8a8a"></div>
<div class="a" style="left:424px;top:34px;width:61px;height:62px;background:transparent;border:2px solid #141414"></div>
<div class="t fit" style="left: 435.5px; top: 43.41px; font-size: 30px; color: rgb(17, 17, 17); font-family: &quot;Liberation Serif&quot;, serif; --w: 15; transform: scaleX(0.898876);">F</div>
<div class="t fit" style="left: 451px; top: 50.11px; font-size: 30px; color: rgb(17, 17, 17); font-family: &quot;Liberation Serif&quot;, serif; --w: 23.5; transform: scaleX(1.08435);">H</div>
<div class="t fit" style="left: 313px; top: 103.43px; font-size: 11.3px; color: rgb(42, 42, 42); font-family: &quot;Liberation Serif&quot;, serif; --w: 293; transform: scaleX(1.10235);">LA FONDATION POUR LA FORMATION HÔTELIÈRE</div>
<div class="t fit" style="left: 237.5px; top: 145.98px; font-size: 48.7px; color: rgb(189, 90, 43); --w: 444.5; transform: scaleX(0.995381);">Marketing and Event</div>
<div class="t fit" style="left: 167px; top: 203.08px; font-size: 48.7px; color: rgb(189, 90, 43); --w: 585.6; transform: scaleX(0.997111);">Management in Restaurant</div>
<div class="t fit" style="left: 369.2px; top: 260.78px; font-size: 48.7px; color: rgb(189, 90, 43); --w: 181; transform: scaleX(0.916166);">Business</div>
<div class="t fit" style="left: 182px; top: 331.01px; font-size: 17px; color: rgb(92, 100, 82); --w: 479; letter-spacing: 1.6px; transform: scaleX(0.918147);">DR MIHAELA LAZOVIĆ (BA MAG. PHD CERT. ED. CGSP)</div>
<div class="t fit" style="left: 182px; top: 388.61px; font-size: 17px; color: rgb(92, 100, 82); --w: 295; letter-spacing: 1.6px; transform: scaleX(0.911857);">ODESSA, SEPTEMBER 28TH 2023.</div>
<div class="a" style="left:0px;top:469px;width:901px;height:39px;background:#bb5a2b;"></div>
<div class="a" style="left:0px;top:469px;width:901px;height:4px;background:#df8424;"></div>
</div></div>
<div class="a" style="left:52.30743618201998px;top:261.5138734739179px;width:30.326304106548278px;height:0.8px;background:#d9b27e;"></div>
<div class="a" style="left:128.12319644839067px;top:261.5138734739179px;width:29.71365149833518px;height:0.8px;background:#d9b27e;"></div>
<div class="a" style="left:52.30743618201998px;top:261.5138734739179px;width:0.8px;height:43.65149833518313px;background:#d9b27e;"></div>
<div class="a" style="left:157.6836847946726px;top:261.5138734739179px;width:0.8px;height:43.65149833518313px;background:#d9b27e;"></div>
<div class="a" style="left:52.30743618201998px;top:305.0122086570477px;width:105.52941176470588px;height:0.8px;background:#d9a06a;"></div>
<div class="a" style="left:48.78468368479467px;top:305.3185349611543px;width:111.65593784683685px;height:0.8px;background:#c8c8c8;"></div>
<div class="a" style="left:35px;top:350px;width:138px;height:79px;background:#fdfdfe;box-shadow:0 0 0 1px #d0d0d0;overflow:hidden"><div class="t fit" style="left: 18.5px; top: 12.92px; font-size: 6px; color: rgb(192, 88, 42); font-weight: 700; --w: 49.5; transform: scaleX(0.894157);">Dr. Mihaela Lazović</div>
<div class="a" style="left:14px;top:21.5px;width:110px;height:1px;background:#c9c9c9;"></div>
<div class="a" style="left:94px;top:3.5px;width:28px;height:43.5px;background:#d6ccd2;"></div>
<div class="a" style="left:94px;top:15px;width:28px;height:15px;background:#2e2c2c;"></div>
<div class="a" style="left:94px;top:30px;width:28px;height:16.5px;background:#7a8080;"></div>
<div class="a" style="left:97px;top:18px;width:24px;height:28px;background:#8a9494;border-radius:9px 9px 0 0;filter:blur(.6px)"></div>
<div class="a" style="left:103px;top:10px;width:9px;height:9px;background:#6a4038;border-radius:50%;filter:blur(.4px)"></div>
<div class="a" style="left:15px;top:26px;width:55px;height:1px;background:#9a9a9a;"></div>
<div class="a" style="left:15px;top:30px;width:60px;height:1px;background:#9a9a9a;"></div>
<div class="a" style="left:15px;top:33px;width:62px;height:1px;background:#9a9a9a;"></div>
<div class="a" style="left:15px;top:35.5px;width:50px;height:1px;background:#9a9a9a;"></div>
<div class="a" style="left:15px;top:39px;width:45px;height:1px;background:#9a9a9a;"></div>
<div class="a" style="left:15px;top:45px;width:40px;height:1px;background:#9a9a9a;"></div>
<div class="a" style="left:15px;top:49px;width:55px;height:1px;background:#9a9a9a;"></div>
<div class="a" style="left:15px;top:55px;width:58px;height:1px;background:#9a9a9a;"></div>
<div class="a" style="left:15px;top:58px;width:60px;height:1px;background:#9a9a9a;"></div>
<div class="a" style="left:15px;top:62px;width:62px;height:1px;background:#9a9a9a;"></div>
<div class="a" style="left:15px;top:65px;width:60px;height:1px;background:#9a9a9a;"></div>
<div class="a" style="left:89px;top:50px;width:31px;height:8px;background:#d8d8d8;"></div>
<div class="a" style="left:99px;top:60px;width:7px;height:8px;background:#fff;border:1px solid #777"></div>
<div class="a" style="left:0px;top:72px;width:138px;height:6px;background:#bb5a2b;"></div>
</div>
<div class="a" style="left:35px;top:445px;width:138px;height:78px;background:#fdfdfe;box-shadow:0 0 0 1px #d0d0d0;overflow:hidden"><div class="a" style="left:4px;top:9.5px;width:40px;height:55.5px;background:#f4ef7e;"></div>
<div class="a" style="left:7px;top:11.5px;width:5px;height:50.5px;background:#f0b418;"></div>
<div class="a" style="left:15.0px;top:13.0px;width:4.5px;height:4.5px;background:#2a2a22;border-radius:1.5px;filter:blur(.3px)"></div>
<div class="a" style="left:21.8px;top:13.0px;width:4.5px;height:4.5px;background:#2a2a22;border-radius:1.5px;filter:blur(.3px)"></div>
<div class="a" style="left:28.6px;top:13.0px;width:4.5px;height:4.5px;background:#2a2a22;border-radius:1.5px;filter:blur(.3px)"></div>
<div class="a" style="left:35.4px;top:13.0px;width:4.5px;height:4.5px;background:#2a2a22;border-radius:1.5px;filter:blur(.3px)"></div>
<div class="a" style="left:15.0px;top:20.2px;width:4.5px;height:4.5px;background:#2a2a22;border-radius:1.5px;filter:blur(.3px)"></div>
<div class="a" style="left:21.8px;top:20.2px;width:4.5px;height:4.5px;background:#2a2a22;border-radius:1.5px;filter:blur(.3px)"></div>
<div class="a" style="left:28.6px;top:20.2px;width:4.5px;height:4.5px;background:#2a2a22;border-radius:1.5px;filter:blur(.3px)"></div>
<div class="a" style="left:35.4px;top:20.2px;width:4.5px;height:4.5px;background:#2a2a22;border-radius:1.5px;filter:blur(.3px)"></div>
<div class="a" style="left:15.0px;top:27.4px;width:4.5px;height:4.5px;background:#2a2a22;border-radius:1.5px;filter:blur(.3px)"></div>
<div class="a" style="left:21.8px;top:27.4px;width:4.5px;height:4.5px;background:#2a2a22;border-radius:1.5px;filter:blur(.3px)"></div>
<div class="a" style="left:28.6px;top:27.4px;width:4.5px;height:4.5px;background:#2a2a22;border-radius:1.5px;filter:blur(.3px)"></div>
<div class="a" style="left:35.4px;top:27.4px;width:4.5px;height:4.5px;background:#2a2a22;border-radius:1.5px;filter:blur(.3px)"></div>
<div class="a" style="left:15.0px;top:34.6px;width:4.5px;height:4.5px;background:#2a2a22;border-radius:1.5px;filter:blur(.3px)"></div>
<div class="a" style="left:21.8px;top:34.6px;width:4.5px;height:4.5px;background:#2a2a22;border-radius:1.5px;filter:blur(.3px)"></div>
<div class="a" style="left:28.6px;top:34.6px;width:4.5px;height:4.5px;background:#2a2a22;border-radius:1.5px;filter:blur(.3px)"></div>
<div class="a" style="left:35.4px;top:34.6px;width:4.5px;height:4.5px;background:#2a2a22;border-radius:1.5px;filter:blur(.3px)"></div>
<div class="a" style="left:15.0px;top:41.8px;width:4.5px;height:4.5px;background:#2a2a22;border-radius:1.5px;filter:blur(.3px)"></div>
<div class="a" style="left:21.8px;top:41.8px;width:4.5px;height:4.5px;background:#2a2a22;border-radius:1.5px;filter:blur(.3px)"></div>
<div class="a" style="left:28.6px;top:41.8px;width:4.5px;height:4.5px;background:#2a2a22;border-radius:1.5px;filter:blur(.3px)"></div>
<div class="a" style="left:35.4px;top:41.8px;width:4.5px;height:4.5px;background:#2a2a22;border-radius:1.5px;filter:blur(.3px)"></div>
<div class="a" style="left:14px;top:50px;width:28.7px;height:11.3px;background:#d42030;"></div>
<div class="a" style="left:44px;top:20px;width:4px;height:1px;background:#666;"></div>
<div class="a" style="left:86.6px;top:20px;width:3px;height:1px;background:#666;"></div>
<div class="a" style="left:48px;top:14px;width:38.6px;height:54px;background:#dcdcdc;background:linear-gradient(#e2e2e0,#cfcfcf)"></div>
<div class="a" style="left:48px;top:14px;width:10px;height:50px;background:#b8202a;"></div>
<div class="a" style="left:53px;top:34px;width:31px;height:23px;background:#4a4442;background:linear-gradient(90deg,#6a4a40,#3a3a3a 50%,#8a8a88)"></div>
<div class="a" style="left:65px;top:23px;width:18px;height:1.5px;background:#555;"></div>
<div class="a" style="left:62px;top:26px;width:22px;height:1.5px;background:#555;"></div>
<div class="a" style="left:89px;top:2px;width:40px;height:42.3px;background:#c9c9c8;box-shadow:1px 0 0 #7a2a2a"></div>
<div class="a" style="left:98px;top:9px;width:9px;height:5px;background:#555;"></div>
<div class="a" style="left:107px;top:8px;width:5px;height:6px;background:#b22;"></div>
<div class="a" style="left:95px;top:26px;width:30px;height:1.2px;background:#c98a8a;"></div>
<div class="a" style="left:95px;top:29px;width:30px;height:1px;background:#aaa;"></div>
<div class="a" style="left:89px;top:44px;width:48.6px;height:26px;background:#d4d0cf;"></div>
<div class="a" style="left:90px;top:50px;width:9px;height:20px;background:#e8e0dc;"></div>
<div class="a" style="left:101px;top:46px;width:8px;height:14px;background:#d02828;"></div>
<div class="a" style="left:104px;top:58px;width:9px;height:12px;background:#e0d8d4;"></div>
<div class="a" style="left:115px;top:56px;width:10px;height:14px;background:#2a2a2e;"></div>
<div class="a" style="left:127px;top:54px;width:10px;height:16px;background:#7a3a2a;"></div>
<div class="t fit" style="left: 53px; top: 5.57px; font-size: 7px; color: rgb(224, 102, 42); font-weight: 700; --w: 31.7; transform: scaleX(0.761562);">Publications</div>
<div class="a" style="left:0px;top:71.3px;width:138px;height:6.7px;background:#c0582a;"></div>
</div>
<div class="a" style="left:35px;top:540px;width:138px;height:78px;background:#fdfdfe;box-shadow:0 0 0 1px #d0d0d0;overflow:hidden"><div class="t fit" style="left: 18.6px; top: 12.81px; font-size: 6.6px; color: rgb(58, 58, 58); --w: 101; transform: scaleX(0.901408);">Marketing Strategy – Tough Challenge</div>
<div class="a" style="left:14px;top:20.3px;width:111px;height:0.9px;background:#555;"></div>
<div class="a" style="left:64px;top:25.7px;width:70px;height:40px;background:#2f6b40;background:radial-gradient(ellipse at 50% 50%,#3a7a4c,#24583a)"></div>
<div class="a" style="left:77px;top:27px;width:48px;height:30px;border:1px solid rgba(230,255,230,.75);border-radius:45%"></div><div class="t fit" style="left: 93px; top: 34px; font-size: 13px; color: rgb(240, 123, 31); font-weight: 700; --w: 9; transform: scaleX(1.24406);">6</div>
<div class="t fit" style="left: 105px; top: 36.8px; font-size: 8.5px; color: rgb(232, 242, 232); --w: 14; transform: scaleX(1.05785);">tips</div>
<div class="a" style="left:87px;top:47px;width:24px;height:2.5px;background:#9fd0a0;"></div>
<div class="a" style="left:82px;top:52px;width:36.7px;height:10.8px;background:#f4f4f4;"></div>
<div class="a" style="left:90px;top:54.5px;width:20px;height:1.3px;background:#444;"></div>
<div class="a" style="left:86px;top:58.5px;width:28px;height:1.3px;background:#444;"></div>
<div class="a" style="left:14px;top:24.5px;width:45px;height:1px;background:#999;"></div>
<div class="a" style="left:14px;top:29.5px;width:43px;height:1px;background:#777;"></div>
<div class="a" style="left:14px;top:32px;width:8px;height:1px;background:#999;"></div>
<div class="a" style="left:14px;top:37.5px;width:18px;height:1px;background:#aaa;"></div>
<div class="a" style="left:14px;top:48px;width:46px;height:1px;background:#999;"></div>
<div class="a" style="left:14px;top:50.5px;width:12px;height:1px;background:#bbb;"></div>
<div class="a" style="left:14px;top:57px;width:40px;height:1px;background:#777;"></div>
<div class="a" style="left:14px;top:60px;width:40px;height:1px;background:#888;"></div>
<div class="a" style="left:14px;top:63px;width:7px;height:1px;background:#888;"></div>
<div class="a" style="left:0px;top:72.3px;width:138px;height:5.7px;background:#bb5a2b;"></div>
</div>
<svg style="left:13px;top:552px" width="10" height="9" viewBox="0 0 10 9"><path d="M5 0 L6.2 3.3 L10 3.4 L7 5.6 L8.1 9 L5 7 L1.9 9 L3 5.6 L0 3.4 L3.8 3.3Z" fill="#666"></path></svg>
<div class="a" style="left:35px;top:634px;width:138px;height:78px;background:#fdfdfe;box-shadow:0 0 0 1px #d0d0d0;overflow:hidden"><div class="t fit" style="left: 32.5px; top: 13px; font-size: 6.5px; color: rgb(51, 51, 51); font-weight: 700; --w: 74; transform: scaleX(0.843005);">The Best Marketing Strategy</div>
<div class="a" style="left:14px;top:20.7px;width:111px;height:1px;background:#999;"></div>
<div class="a" style="left:44.6px;top:24px;width:86.4px;height:40.5px;background:#c9c9c9;background:linear-gradient(90deg,#cfcdcb,#bebcba 50%,#c8c6c4)"></div>
<div class="a" style="left:70.5px;top:24.5px;width:40px;height:29px;border-radius:50% 50% 42% 48%;background:repeating-linear-gradient(60deg,#d24848 0,#d24848 1.3px,#e89090 1.3px,#e89090 2px)"></div><div class="a" style="left:95px;top:50px;width:6px;height:12px;background:#d86a6a;border-radius:2px"></div>
<div class="a" style="left:50px;top:24px;width:13px;height:9.8px;background:#f6f6f6;border-radius:45%;box-shadow:0 1px 1px rgba(0,0,0,.15)"></div>
<div class="a" style="left:55px;top:39.4px;width:11.8px;height:6.6px;background:#f6f6f6;border-radius:45%;box-shadow:0 1px 1px rgba(0,0,0,.15)"></div>
<div class="a" style="left:62.5px;top:51.7px;width:12.5px;height:9.3px;background:#f6f6f6;border-radius:45%;box-shadow:0 1px 1px rgba(0,0,0,.15)"></div>
<div class="a" style="left:111.6px;top:26px;width:8px;height:8.7px;background:#f6f6f6;border-radius:45%;box-shadow:0 1px 1px rgba(0,0,0,.15)"></div>
<div class="a" style="left:113px;top:40px;width:12px;height:7px;background:#f6f6f6;border-radius:45%;box-shadow:0 1px 1px rgba(0,0,0,.15)"></div>
<div class="a" style="left:14px;top:27px;width:19px;height:0.9px;background:#666;"></div>
<div class="a" style="left:14px;top:32px;width:23px;height:0.9px;background:#888;"></div>
<div class="a" style="left:14px;top:70px;width:62px;height:1px;background:#6a9ed0;"></div>
<div class="a" style="left:0px;top:72px;width:138px;height:5.5px;background:#bb5a2b;"></div>
</div>
<div class="a" style="left:35px;top:729px;width:138px;height:43px;background:#fdfdfe;box-shadow:0 0 0 1px #d0d0d0;overflow:hidden"><div class="a" style="left:14.8px;top:7px;width:109px;height:36px;background:#151515;background:linear-gradient(#040404 0,#1a1a1a 30%,#4a4a4a 70%,#6a6a6a)"></div>
<div class="a" style="left:24px;top:14px;width:16px;height:4px;background:#bbb;border-radius:3px;filter:blur(1.5px)"></div>
<div class="a" style="left:58px;top:16px;width:14px;height:3px;background:#999;border-radius:3px;filter:blur(1.5px)"></div>
<div class="a" style="left:95px;top:19px;width:14px;height:5px;background:#ccc;border-radius:3px;filter:blur(2px)"></div>
<div class="a" style="left:40px;top:22px;width:12px;height:4px;background:#aaa;border-radius:3px;filter:blur(2px)"></div>
<div class="a" style="left:16px;top:26px;width:20px;height:17px;background:#7a7a7a;filter:blur(2px)"></div>
<div class="a" style="left:100px;top:26px;width:22px;height:17px;background:#8a8a8a;filter:blur(2px)"></div>
<div class="a" style="left:45px;top:27px;width:38px;height:16px;background:#e42a22;border-radius:1px"></div>
<div class="a" style="left:54px;top:31px;width:20px;height:12px;background:#111;border-radius:50% 50% 0 0"></div>
<div class="a" style="left:57px;top:37px;width:14px;height:2px;background:#ddd;"></div>
</div>
<div class="a" style="left:190px;top:242px;width:12px;height:528px;background:#dcdcdc;"></div>
<div class="a" style="left:190px;top:242px;width:12px;height:12px;background:#fdfdfd;border:1px solid #d0d0d0"></div>
<svg style="left:193px;top:246px" width="7" height="4" viewBox="0 0 7 4"><path d="M0 4 L3.5 0 L7 4Z" fill="#555"></path></svg>
<div class="a" style="left:190px;top:255px;width:12px;height:32px;background:#fdfdfd;border:1px solid #c8c8c8"></div>
<div class="a" style="left:190px;top:758px;width:12px;height:12px;background:#fdfdfd;border:1px solid #d0d0d0"></div>
<svg style="left:193px;top:762px" width="7" height="4" viewBox="0 0 7 4"><path d="M0 0 L3.5 4 L7 0Z" fill="#555"></path></svg>
<div class="a" style="left:1252px;top:242px;width:12px;height:530px;background:#d9d9dc;"></div>
<div class="a" style="left:1252px;top:243px;width:12px;height:11px;background:#fdfdfd;border:1px solid #d0d0d0"></div>
<svg style="left:1255px;top:246px" width="7" height="4" viewBox="0 0 7 4"><path d="M0 4 L3.5 0 L7 4Z" fill="#555"></path></svg>
<div class="a" style="left:1252px;top:254px;width:12px;height:14px;background:#fdfdfd;border:1px solid #c8c8c8"></div>
<div class="a" style="left:1252px;top:713px;width:12px;height:11px;background:#fdfdfd;border:1px solid #d0d0d0"></div>
<svg style="left:1255px;top:717px" width="7" height="4" viewBox="0 0 7 4"><path d="M0 0 L3.5 4 L7 0Z" fill="#555"></path></svg>
<div class="a" style="left:1252px;top:724px;width:12px;height:48px;background:#e5e5e5;"></div>
<svg style="left:1254px;top:728px" width="9" height="9" viewBox="0 0 9 9"><rect x="0.5" y="0" width="8" height="1.2" fill="#777"></rect><path d="M4.5 1.5 L8.5 5 H0.5Z M4.5 4.5 L8.5 8.5 H0.5Z" fill="#777"></path></svg>
<svg style="left:1254px;top:742px" width="9" height="9" viewBox="0 0 9 9"><path d="M0.5 0.5 H8.5 L4.5 4Z M0.5 3.5 H8.5 L4.5 7.5Z" fill="#777"></path><rect x="0.5" y="7.8" width="8" height="1.2" fill="#777"></rect></svg>
<div class="a" style="left:206px;top:769px;width:1059px;height:1px;background:#d2d2d2;"></div>
<div class="t fit" style="left: 11.6px; top: 776.16px; font-size: 9.5px; color: rgb(69, 69, 69); --w: 47; transform: scaleX(0.889678);">Slide 1 of 88</div>
<svg style="left:72px;top:775px" width="13" height="12" viewBox="0 0 13 12"><path d="M0.5 1 H5 C6 1 6.5 2 6.5 3 V11 C6.5 10 6 9.5 5 9.5 H0.5Z M6.5 3 C6.5 2 7 1 8 1" fill="none" stroke="#666"></path><path d="M8 10 L12 5" stroke="#666"></path></svg>
<div class="t fit" style="left: 95px; top: 776.16px; font-size: 9.5px; color: rgb(69, 69, 69); --w: 85; transform: scaleX(0.874739);">English (United States)</div>
<svg style="left:884px;top:776px" width="10" height="11" viewBox="0 0 10 11"><path d="M0 10.5 H10 M0 8 H10 M2 5 L5 1 L8 5" stroke="#666" fill="none"></path></svg>
<div class="t fit" style="left: 897.6px; top: 775.56px; font-size: 9.5px; color: rgb(69, 69, 69); --w: 22.3; transform: scaleX(0.898175);">Notes</div>
<svg style="left:934px;top:776px" width="12" height="11" viewBox="0 0 12 11"><path d="M0 0 H12 V8 H4 L2 11 V8 H0Z" fill="#606060"></path></svg>
<div class="t fit" style="left: 948px; top: 775.56px; font-size: 9.5px; color: rgb(69, 69, 69); --w: 40.4; transform: scaleX(0.879456);">Comments</div>
<div class="a" style="left:1002px;top:772px;width:28px;height:18px;background:#d0d0d0;"></div>
<svg style="left:1010px;top:776px" width="12" height="10" viewBox="0 0 12 10"><rect x="0.5" y="0.5" width="11" height="9" fill="none" stroke="#777"></rect><rect x="2.5" y="2.5" width="7" height="4" fill="none" stroke="#777"></rect></svg>
<svg style="left:1037px;top:776px" width="12" height="11" viewBox="0 0 12 11"><rect x="0.5" y="0.5" width="4" height="4" fill="none" stroke="#888"></rect><rect x="7.5" y="0.5" width="4" height="4" fill="none" stroke="#888"></rect><rect x="0.5" y="6.5" width="4" height="4" fill="none" stroke="#888"></rect><rect x="7.5" y="6.5" width="4" height="4" fill="none" stroke="#888"></rect></svg>
<svg style="left:1065px;top:776px" width="12" height="10" viewBox="0 0 12 10"><rect x="0.5" y="0.5" width="11" height="9" fill="none" stroke="#888"></rect><path d="M6 0.5 V9.5 M2 3 H4.5 M2 5 H4.5 M7.5 3 H10 M7.5 5 H10" stroke="#888"></path></svg>
<svg style="left:1093px;top:776px" width="12" height="11" viewBox="0 0 12 11"><path d="M0 0.5 H12 M1.5 1 V7 H10.5 V1 M6 7 V11 M4 10.5 H8" stroke="#888" fill="none"></path><rect x="3.5" y="2.5" width="5" height="3" fill="none" stroke="#888"></rect></svg>
<div class="a" style="left:1116px;top:780px;width:6px;height:1.5px;background:#555;"></div>
<div class="a" style="left:1125px;top:781px;width:82px;height:1px;background:#b5b5b5;"></div>
<div class="a" style="left:1167px;top:778px;width:1px;height:6px;background:#b5b5b5;"></div>
<div class="a" style="left:1158.5px;top:776px;width:4px;height:10px;background:#666;"></div>
<svg style="left:1209px;top:777px" width="7" height="7" viewBox="0 0 7 7"><path d="M3.5 0 V7 M0 3.5 H7" stroke="#555" stroke-width="1.5"></path></svg>
<div class="t fit" style="left: 1223px; top: 775.56px; font-size: 9.5px; color: rgb(69, 69, 69); --w: 16; transform: scaleX(0.841413);">86%</div>
<svg style="left:1250px;top:776px" width="11" height="11" viewBox="0 0 11 11"><rect x="0.5" y="0.5" width="10" height="10" fill="none" stroke="#999"></rect><path d="M5.5 1 V3.5 M5.5 7.5 V10 M1 5.5 H3.5 M7.5 5.5 H10 M3.5 3.5 H7.5 V7.5 H3.5Z" stroke="#999" fill="none"></path></svg>
<!--/BODY-->
<!--ZOOMUI-->
<div class="tile" style="top:117px;background:#dde3ea"><div class="a" style="left:0px;top:0px;width:160px;height:90px;background:transparent;background:linear-gradient(90deg,#d4dee8 0,#dfe5ec 40%,#e6eaef 100%)"></div>
<div class="a" style="left:0;top:0;width:160px;height:22px;background:#eceef1;clip-path:polygon(0 0,160px 0,160px 4px,25px 19px,0 11px)"></div><div class="a" style="left:0;top:11px;width:25px;height:79px;background:#c9d8e6;clip-path:polygon(0 0,25px 8px,25px 79px,0 79px)"></div><div class="a" style="left:113px;top:18px;width:15px;height:2px;background:#a55b4c;"></div>
<div class="a" style="left:113px;top:29px;width:15px;height:2px;background:#a55b4c;"></div>
<div class="a" style="left:113px;top:42px;width:15px;height:2px;background:#a55b4c;"></div>
<div class="a" style="left:116px;top:18px;width:2px;height:26px;background:#a55b4c;"></div>
<div class="a" style="left:127px;top:10px;width:2px;height:35px;background:#a55b4c;"></div>
<div class="a" style="left:128px;top:22px;width:32px;height:2px;background:#a55b4c;"></div>
<div class="a" style="left:128px;top:35px;width:32px;height:2px;background:#a55b4c;"></div>
<div class="a" style="left:148px;top:5px;width:2px;height:36px;background:#a55b4c;"></div>
<div class="a" style="left:149px;top:12px;width:11px;height:2px;background:#a55b4c;"></div>
<div class="a" style="left:135px;top:9px;width:4px;height:12px;background:#6b5a40;border-radius:2px;filter:blur(0.5px);"></div>
<div class="a" style="left:151px;top:24px;width:3px;height:10px;background:#6b5a40;border-radius:2px;filter:blur(0.5px);"></div>
<div class="a" style="left:119px;top:47px;width:38px;height:22px;background:#4d5e48;border-radius:50%;filter:blur(1.2px);"></div>
<div class="a" style="left:132px;top:62px;width:10px;height:10px;background:#777;border-radius:2px;filter:blur(0.6px);"></div>
<div class="a" style="left:152px;top:52px;width:8px;height:20px;background:#b85a4a;border-radius:2px;filter:blur(0.8px);"></div>
<div class="a" style="left:36px;top:33px;width:62px;height:66px;background:#4a3c34;border-radius:30px 34px 6px 6px;filter:blur(1.3px);"></div>
<div class="a" style="left:58px;top:31px;width:30px;height:10px;background:#5a4a40;border-radius:50%;filter:blur(1.2px);"></div>
<div class="a" style="left:49px;top:47px;width:38px;height:48px;background:#7a6964;border-radius:14px 16px 8px 8px;filter:blur(1.6px);"></div>
<div class="a" style="left:53px;top:61px;width:12px;height:3px;background:#4a3a36;border-radius:2px;filter:blur(0.8px);"></div>
<div class="a" style="left:71px;top:61px;width:12px;height:3px;background:#4a3a36;border-radius:2px;filter:blur(0.8px);"></div>
<div class="a" style="left:40px;top:50px;width:10px;height:45px;background:#3e322c;border-radius:5px;filter:blur(1.2px);"></div>
<div class="a" style="left:87px;top:50px;width:11px;height:45px;background:#3e322c;border-radius:5px;filter:blur(1.2px);"></div>
</div>
<div class="a" style="left:1359px;top:187px;width:151px;height:19px;background:rgba(48,48,48,0.72);"></div>
<svg style="left:1362px;top:189.5px" width="14" height="14" viewBox="0 0 14 14"><rect x="4.5" y="0.5" width="5" height="8.5" rx="2.5" fill="#e85a55"></rect><path d="M2.8 6 C2.8 9.3 4.8 11 7 11 C9.2 11 11.2 9.3 11.2 6 M7 11 V13 M4.5 13.2 H9.5" stroke="#e85a55" stroke-width="1.3" fill="none"></path><path d="M0.8 13.8 L13.2 0.8" stroke="#e85a55" stroke-width="1.5"></path></svg>
<div class="t fit" style="left: 1381px; top: 191.17px; font-size: 12.2px; color: rgb(255, 255, 255); --w: 127.4; -webkit-text-stroke: 0.25px rgb(255, 255, 255); transform: scaleX(1.08009);">Вікторія Кожевнікова</div>
<div class="tile" style="top:213px;background:#232323"></div>
<div class="t fit" style="left: 1375px; top: 250.46px; font-size: 14.7px; color: rgb(242, 242, 242); font-weight: 700; --w: 126.8; transform: scaleX(0.995974);">Arkhypova&nbsp; Liud...</div>
<div class="a" style="left:1359px;top:283px;width:141px;height:19px;background:rgba(48,48,48,0.72);"></div>
<svg style="left:1362px;top:285.5px" width="14" height="14" viewBox="0 0 14 14"><rect x="4.5" y="0.5" width="5" height="8.5" rx="2.5" fill="#e85a55"></rect><path d="M2.8 6 C2.8 9.3 4.8 11 7 11 C9.2 11 11.2 9.3 11.2 6 M7 11 V13 M4.5 13.2 H9.5" stroke="#e85a55" stroke-width="1.3" fill="none"></path><path d="M0.8 13.8 L13.2 0.8" stroke="#e85a55" stroke-width="1.5"></path></svg>
<div class="t fit" style="left: 1381px; top: 287.47px; font-size: 12.2px; color: rgb(255, 255, 255); --w: 115.7; -webkit-text-stroke: 0.25px rgb(255, 255, 255); transform: scaleX(1.05421);">Arkhypova Liudmyla</div>
<div class="tile" style="top:309px;background:#e3d9c2"><div class="a" style="left:51px;top:0px;width:109px;height:17px;background:#ecebe6;"></div>
<div class="a" style="left:0px;top:0px;width:52px;height:75px;background:#f2f2f0;background:linear-gradient(90deg,#f7f7f5,#eeeeea 30%,#f6f6f3 45%,#e2e2dc 70%,#d9d6cb)"></div>
<div class="a" style="left:9px;top:0px;width:1px;height:70px;background:rgba(200,200,195,.6);"></div>
<div class="a" style="left:17px;top:0px;width:1px;height:70px;background:rgba(200,200,195,.6);"></div>
<div class="a" style="left:26px;top:0px;width:1px;height:70px;background:rgba(200,200,195,.6);"></div>
<div class="a" style="left:36px;top:0px;width:1px;height:70px;background:rgba(200,200,195,.6);"></div>
<div class="a" style="left:44px;top:0px;width:1px;height:70px;background:rgba(200,200,195,.6);"></div>
<div class="a" style="left:76px;top:21.5px;width:18px;height:11px;background:#1e1e22;"></div>
<div class="a" style="left:63px;top:28px;width:8.5px;height:6px;background:#3e62b0;"></div>
<div class="a" style="left:150px;top:27px;width:9px;height:7px;background:#2a3450;"></div>
<div class="a" style="left:106px;top:28px;width:40px;height:18.5px;background:#8a6a4a;"></div>
<div class="a" style="left:107.5px;top:29.5px;width:11px;height:15.5px;background:#c9c0b0;"></div>
<div class="a" style="left:120px;top:29.5px;width:11.5px;height:15.5px;background:#8aa0c0;"></div>
<div class="a" style="left:133px;top:29.5px;width:11.5px;height:15.5px;background:#c0a888;"></div>
<div class="a" style="left:0px;top:62px;width:160px;height:28px;background:#7b5a46;background:linear-gradient(#9a7458,#5a4434)"></div>
<div class="a" style="left:142px;top:58px;width:12px;height:20px;background:#2e2a28;border-radius:2px;filter:blur(0.8px);"></div>
<div class="a" style="left:150px;top:62px;width:10px;height:28px;background:#3a3028;border-radius:0;filter:blur(1px);"></div>
<div class="a" style="left:120px;top:70px;width:40px;height:20px;background:#7a5a44;border-radius:0;filter:blur(1.5px);"></div>
<div class="a" style="left:10px;top:53px;width:32px;height:50px;background:#4d5a4f;border-radius:40% 40% 0 0;filter:blur(0.9px);"></div>
<div class="a" style="left:20.0px;top:45px;width:12px;height:14px;background:#b08a78;border-radius:50%;filter:blur(0.8px);"></div>
<div class="a" style="left:40px;top:55px;width:18px;height:45px;background:#cdb8a0;border-radius:40% 40% 0 0;filter:blur(0.9px);"></div>
<div class="a" style="left:44.5px;top:47px;width:9px;height:11px;background:#c8a890;border-radius:50%;filter:blur(0.8px);"></div>
<div class="a" style="left:55px;top:58px;width:12px;height:40px;background:#3a2e2a;border-radius:40% 40% 0 0;filter:blur(0.9px);"></div>
<div class="a" style="left:57.5px;top:50px;width:7px;height:9px;background:#b89a88;border-radius:50%;filter:blur(0.8px);"></div>
<div class="a" style="left:63px;top:59px;width:10px;height:40px;background:#7a5a5a;border-radius:40% 40% 0 0;filter:blur(0.9px);"></div>
<div class="a" style="left:65.0px;top:51px;width:6px;height:8px;background:#c8a090;border-radius:50%;filter:blur(0.8px);"></div>
<div class="a" style="left:75px;top:58px;width:12px;height:40px;background:#2e2e3a;border-radius:40% 40% 0 0;filter:blur(0.9px);"></div>
<div class="a" style="left:77.5px;top:50px;width:7px;height:9px;background:#c8a898;border-radius:50%;filter:blur(0.8px);"></div>
<div class="a" style="left:88px;top:59px;width:10px;height:40px;background:#2a2a3a;border-radius:40% 40% 0 0;filter:blur(0.9px);"></div>
<div class="a" style="left:90.0px;top:51px;width:6px;height:8px;background:#d0b0a0;border-radius:50%;filter:blur(0.8px);"></div>
<div class="a" style="left:97px;top:58px;width:12px;height:40px;background:#ececec;border-radius:40% 40% 0 0;filter:blur(0.9px);"></div>
<div class="a" style="left:99.5px;top:50px;width:7px;height:9px;background:#c8a898;border-radius:50%;filter:blur(0.8px);"></div>
<div class="a" style="left:107px;top:55px;width:16px;height:43px;background:#c83a34;border-radius:40% 40% 0 0;filter:blur(0.9px);"></div>
<div class="a" style="left:110.5px;top:47px;width:9px;height:11px;background:#3a2420;border-radius:50%;filter:blur(0.8px);"></div>
<div class="a" style="left:121px;top:55px;width:16px;height:43px;background:#3a5a8a;border-radius:40% 40% 0 0;filter:blur(0.9px);"></div>
<div class="a" style="left:124.5px;top:47px;width:9px;height:11px;background:#b08060;border-radius:50%;filter:blur(0.8px);"></div>
<div class="a" style="left:66px;top:66px;width:14px;height:10px;background:#c8a840;border-radius:3px;filter:blur(1px);"></div>
</div>
<div class="a" style="left:1359px;top:380px;width:137px;height:19px;background:rgba(48,48,48,0.72);"></div>
<svg style="left:1362px;top:382.5px" width="14" height="14" viewBox="0 0 14 14"><rect x="4.5" y="0.5" width="5" height="8.5" rx="2.5" fill="#e85a55"></rect><path d="M2.8 6 C2.8 9.3 4.8 11 7 11 C9.2 11 11.2 9.3 11.2 6 M7 11 V13 M4.5 13.2 H9.5" stroke="#e85a55" stroke-width="1.3" fill="none"></path><path d="M0.8 13.8 L13.2 0.8" stroke="#e85a55" stroke-width="1.5"></path></svg>
<div class="t fit" style="left: 1381px; top: 384.07px; font-size: 12.2px; color: rgb(255, 255, 255); --w: 110.8; -webkit-text-stroke: 0.25px rgb(255, 255, 255); transform: scaleX(1.04822);">Kateryna Fedosova</div>
<div class="tile" style="top:405px;background:linear-gradient(180deg,#6c90b4 0%,#93aec6 30%,#a9bccb 48%,#8b9ca8 60%,#70808a 100%)"><div class="a" style="left:6.5px;top:0px;width:28px;height:23px;background:#4a6e8e;box-shadow:1px 1px 0 #c8d6e0"></div>
<div class="a" style="left:13px;top:4px;width:14px;height:12px;background:#a8c8e0;border-radius:50%;filter:blur(0.8px);"></div>
<div class="a" style="left:98px;top:0px;width:55px;height:30px;background:#f8f0e6;"></div>
<svg style="left:104px;top:6px" width="14" height="18" viewBox="0 0 14 18"><circle cx="7" cy="4.5" r="3.2" fill="none" stroke="#333" stroke-width="1.2"></circle><circle cx="3.8" cy="10" r="3.2" fill="none" stroke="#333" stroke-width="1.2"></circle><circle cx="10.2" cy="10" r="3.2" fill="none" stroke="#333" stroke-width="1.2"></circle></svg>
<div class="a" style="left:119px;top:8px;width:26px;height:2px;background:#444;"></div>
<div class="a" style="left:119px;top:12.5px;width:30px;height:2px;background:#444;"></div>
<div class="a" style="left:119px;top:17px;width:22px;height:1.6px;background:#666;"></div>
<div class="a" style="left:0px;top:44px;width:160px;height:16px;background:#8e9ea8;border-radius:0;filter:blur(1.5px);"></div>
<div class="a" style="left:12px;top:48px;width:6px;height:10px;background:#6a7a86;border-radius:0;filter:blur(0.6px);"></div>
<div class="a" style="left:22px;top:46px;width:5px;height:12px;background:#7a8a96;border-radius:0;filter:blur(0.6px);"></div>
<div class="a" style="left:60px;top:47px;width:8px;height:10px;background:#8a9aa6;border-radius:0;filter:blur(0.6px);"></div>
<div class="a" style="left:105px;top:47px;width:6px;height:10px;background:#7a8a90;border-radius:0;filter:blur(0.6px);"></div>
<div class="a" style="left:118px;top:45px;width:5px;height:13px;background:#6a7a80;border-radius:0;filter:blur(0.6px);"></div>
<div class="a" style="left:130px;top:48px;width:8px;height:9px;background:#8a9090;border-radius:0;filter:blur(0.6px);"></div>
<div class="a" style="left:145px;top:46px;width:6px;height:12px;background:#7a868c;border-radius:0;filter:blur(0.6px);"></div>
<div class="a" style="left:41px;top:31px;width:5px;height:27px;background:#4e5e6a;border-radius:0;filter:blur(0.5px);"></div>
<div class="a" style="left:95px;top:33px;width:4px;height:24px;background:#6e7e8a;border-radius:0;filter:blur(0.5px);"></div>
<div class="a" style="left:0px;top:44px;width:9px;height:12px;background:#6a3a30;border-radius:0;filter:blur(0.6px);"></div>
<div class="a" style="left:2px;top:56px;width:48px;height:14px;background:#dfe4e8;border-radius:0;filter:blur(1px);"></div>
<div class="a" style="left:2px;top:62px;width:48px;height:3px;background:#b8c0c6;border-radius:0;filter:blur(0.5px);"></div>
<div class="a" style="left:0px;top:70px;width:45px;height:20px;background:#4a4848;border-radius:0;filter:blur(1px);"></div>
<div class="a" style="left:100px;top:58px;width:60px;height:18px;background:#86584a;border-radius:0;filter:blur(1px);"></div>
<div class="a" style="left:100px;top:70px;width:60px;height:20px;background:#667a46;border-radius:0;filter:blur(1.5px);"></div>
<div class="a" style="left:115px;top:66px;width:20px;height:14px;background:#55703a;border-radius:50%;filter:blur(1.5px);"></div>
<div class="a" style="left:50px;top:18px;width:42px;height:42px;background:#c9c2ae;border-radius:20px 20px 12px 12px;filter:blur(1.3px);"></div>
<div class="a" style="left:46px;top:35px;width:10px;height:28px;background:#c4bca8;border-radius:5px;filter:blur(1.5px);"></div>
<div class="a" style="left:86px;top:35px;width:10px;height:28px;background:#c4bca8;border-radius:5px;filter:blur(1.5px);"></div>
<div class="a" style="left:58px;top:30px;width:27px;height:31px;background:#d9b2a8;border-radius:12px 12px 14px 14px;filter:blur(1px);"></div>
<div class="a" style="left:57px;top:37px;width:13px;height:8px;background:transparent;border-radius:40%;filter:blur(0.3px);border:1.5px solid #3a2620"></div>
<div class="a" style="left:71px;top:37px;width:13px;height:8px;background:transparent;border-radius:40%;filter:blur(0.3px);border:1.5px solid #3a2620"></div>
<div class="a" style="left:66px;top:50px;width:10px;height:2px;background:#b88078;border-radius:1px;filter:blur(0.5px);"></div>
<div class="a" style="left:43px;top:54px;width:58px;height:40px;background:#e0326c;border-radius:24px 24px 0 0;filter:blur(0.8px);"></div>
<div class="a" style="left:62px;top:55px;width:18px;height:8px;background:#d8b0a8;border-radius:0 0 50% 50%;filter:blur(1px);"></div>
</div>
<div class="a" style="left:1359px;top:476px;width:82.5px;height:19px;background:rgba(48,48,48,0.72);"></div>
<svg style="left:1362px;top:478.5px" width="14" height="14" viewBox="0 0 14 14"><rect x="4.5" y="0.5" width="5" height="8.5" rx="2.5" fill="#e85a55"></rect><path d="M2.8 6 C2.8 9.3 4.8 11 7 11 C9.2 11 11.2 9.3 11.2 6 M7 11 V13 M4.5 13.2 H9.5" stroke="#e85a55" stroke-width="1.3" fill="none"></path><path d="M0.8 13.8 L13.2 0.8" stroke="#e85a55" stroke-width="1.5"></path></svg>
<div class="t fit" style="left: 1381px; top: 480.37px; font-size: 12.2px; color: rgb(255, 255, 255); --w: 56.8; -webkit-text-stroke: 0.25px rgb(255, 255, 255); transform: scaleX(1.02227);">Liz Ineson</div>
<div class="a" style="left:1355px;top:497px;width:168px;height:98px;background:#dcee7e;background:linear-gradient(180deg,#e0ee86 0%,#d2ea74 40%,#86d838 48%,#86d838 53%,#d8ec7c 62%,#e8f08e 100%)"></div>
<div class="a" style="left:1355px;top:497px;width:168px;height:4px;background:#e1ef88;"></div>
<div class="a" style="left:1355px;top:591px;width:168px;height:4px;background:#e8f08e;"></div>
<div class="tile" style="top:501px;height:90px;background:linear-gradient(180deg,#d3d4d7 0%,#d9dadd 38%,#e2e3e5 42%,#e6e7e9 100%)"><div class="a" style="left:0px;top:40px;width:62px;height:50px;background:#e8e9eb;border-radius:0;filter:blur(1.2px);"></div>
<div class="a" style="left:120px;top:20px;width:40px;height:70px;background:#e9eaee;border-radius:0;filter:blur(4px);"></div>
<div class="a" style="left:78px;top:2px;width:58px;height:42px;background:#f9f9f9;clip-path:polygon(14px 0,22px 0,56px 26px,45px 40px,12px 14px);filter:blur(.5px)"></div><div class="a" style="left:2px;top:2px;width:22px;height:13px;background:#c9cbcd;border-radius:50%;filter:blur(0.6px);"></div>
<div class="a" style="left:7px;top:5px;width:12px;height:6px;background:#8a8c90;border-radius:50%;filter:blur(0.6px);"></div>
<div class="a" style="left:111px;top:55px;width:16px;height:35px;background:#36383e;border-radius:0;filter:blur(0.7px);"></div>
<div class="a" style="left:133px;top:72px;width:27px;height:18px;background:#2a2c30;border-radius:0;filter:blur(1px);"></div>
<div class="a" style="left:40px;top:70px;width:98px;height:28px;background:#6d5b56;border-radius:30px 30px 0 0;filter:blur(1.2px);"></div>
<div class="a" style="left:68px;top:26px;width:40px;height:46px;background:#c99a88;border-radius:14px 14px 18px 18px;filter:blur(1px);"></div>
<div class="a" style="left:63px;top:12px;width:47px;height:20px;background:#7a1c26;border-radius:24px 24px 4px 4px;filter:blur(1px);"></div>
<div class="a" style="left:63px;top:22px;width:9px;height:22px;background:#7a1c26;border-radius:4px;filter:blur(1px);"></div>
<div class="a" style="left:102px;top:22px;width:8px;height:20px;background:#7a1c26;border-radius:4px;filter:blur(1px);"></div>
<div class="a" style="left:68px;top:40px;width:16px;height:10px;background:transparent;border-radius:3px;filter:blur(0.4px);border:1.3px solid #3a2a28"></div>
<div class="a" style="left:86px;top:40px;width:17px;height:10px;background:transparent;border-radius:3px;filter:blur(0.4px);border:1.3px solid #3a2a28"></div>
<div class="a" style="left:81px;top:61px;width:12px;height:4.5px;background:#c4202a;border-radius:3px;filter:blur(0.6px);"></div>
</div>
<div class="a" style="left:1359px;top:571px;width:121px;height:19.5px;background:rgba(48,48,48,0.72);"></div>
<div class="t fit" style="left: 1363.3px; top: 575.67px; font-size: 12.2px; color: rgb(255, 255, 255); --w: 112.2; -webkit-text-stroke: 0.25px rgb(255, 255, 255); transform: scaleX(1.05491);">Dr. Mihaela Lazović</div>
<div class="tile" style="top:597px;background:#232323"></div>
<div class="a" style="left:1399px;top:602px;width:80px;height:80px;background:#34721f;"></div>
<div class="a" style="left:1436.7px;top:626.7px;width:5.5px;height:31px;background:#ffffff;"></div>
<div class="a" style="left:1359px;top:668px;width:121px;height:19px;background:rgba(48,48,48,0.72);"></div>
<svg style="left:1362px;top:670.5px" width="14" height="14" viewBox="0 0 14 14"><rect x="4.5" y="0.5" width="5" height="8.5" rx="2.5" fill="#e85a55"></rect><path d="M2.8 6 C2.8 9.3 4.8 11 7 11 C9.2 11 11.2 9.3 11.2 6 M7 11 V13 M4.5 13.2 H9.5" stroke="#e85a55" stroke-width="1.3" fill="none"></path><path d="M0.8 13.8 L13.2 0.8" stroke="#e85a55" stroke-width="1.5"></path></svg>
<div class="t fit" style="left: 1381px; top: 671.17px; font-size: 12.2px; color: rgb(255, 255, 255); --w: 95; -webkit-text-stroke: 0.25px rgb(255, 255, 255); transform: scaleX(1.09946);">Ірина Лошенюк</div>
<div class="tile" style="top:693px;background:#232323"></div>
<div class="a" style="left:1405px;top:693px;width:68px;height:90px;overflow:hidden;background:linear-gradient(180deg,#d8d6d2,#d4d1cb 50%,#cbc6bf)"><div class="a" style="left:30px;top:-2px;width:24px;height:48px;background:#efeee9;clip-path:polygon(0 0,45% 0,100% 100%,50% 100%);filter:blur(.6px)"></div><div class="a" style="left:35px;top:16px;width:13px;height:28px;background:repeating-linear-gradient(90deg,#f4f3ee 0,#f4f3ee 2px,#9a9890 2px,#9a9890 3px);clip-path:polygon(0 0,40% 0,100% 100%,60% 100%)"></div><div class="a" style="left:0px;top:44px;width:8px;height:18px;background:#aaa8a2;border-radius:0;filter:blur(0.8px);"></div>
<div class="a" style="left:22px;top:43px;width:52px;height:52px;background:#b48a6e;border-radius:24px 26px 0 0;filter:blur(1px);"></div>
<div class="a" style="left:26px;top:48px;width:44px;height:40px;background:#caa898;border-radius:20px 22px 0 0;filter:blur(1.5px);"></div>
<div class="a" style="left:28px;top:66px;width:40px;height:5px;background:#5a4038;border-radius:2px;filter:blur(1px);"></div>
</div>
<div class="a" style="left:1359px;top:764px;width:138px;height:19px;background:rgba(48,48,48,0.72);"></div>
<svg style="left:1362px;top:766.5px" width="14" height="14" viewBox="0 0 14 14"><rect x="4.5" y="0.5" width="5" height="8.5" rx="2.5" fill="#e85a55"></rect><path d="M2.8 6 C2.8 9.3 4.8 11 7 11 C9.2 11 11.2 9.3 11.2 6 M7 11 V13 M4.5 13.2 H9.5" stroke="#e85a55" stroke-width="1.3" fill="none"></path><path d="M0.8 13.8 L13.2 0.8" stroke="#e85a55" stroke-width="1.5"></path></svg>
<div class="t fit" style="left: 1381px; top: 767.47px; font-size: 12.2px; color: rgb(255, 255, 255); --w: 111.9; -webkit-text-stroke: 0.25px rgb(255, 255, 255); transform: scaleX(1.01915);">АННА КВАСИКОВА</div>
<div class="a" style="left:1402px;top:789px;width:73px;height:33px;background:#111111;border-radius:5px"></div>
<svg style="left:1431px;top:802px" width="15" height="9" viewBox="0 0 15 9"><path d="M1 1 L7.5 7.5 L14 1" stroke="#8b8ca3" stroke-width="1.8" fill="none"></path></svg>
<svg style="left:34px;top:852px" width="25" height="24" viewBox="0 0 25 24"><rect x="8.2" y="0.8" width="8" height="15.5" rx="4" fill="#b5b5b5"></rect><path d="M5.3 11 C5.3 15.5 8.3 17.8 12.2 17.8 C16.1 17.8 19 15.5 19 11 M12.2 17.8 V22.3 M8.2 22.6 H16.2" stroke="#b5b5b5" stroke-width="1.7" fill="none"></path><path d="M0.8 23.2 L23.6 0.8" stroke="#1b1b1b" stroke-width="4"></path><path d="M0.8 23.2 L23.6 0.8" stroke="#f06262" stroke-width="2"></path></svg>
<div class="t fit" style="left: 24px; top: 880.75px; font-size: 12.7px; color: rgb(212, 212, 212); --w: 43; transform: scaleX(0.967651);">Unmute</div>
<svg style="left:73.5px;top:862px" width="9" height="5" viewBox="0 0 9 5"><path d="M0.8 4.5 L4.5 0.8 L8.2 4.5" stroke="#cfcfcf" stroke-width="1.3" fill="none"></path></svg>
<svg style="left:127px;top:852px" width="24" height="24" viewBox="0 0 24 24"><rect x="0.5" y="5" width="16" height="14" rx="2.5" fill="#b5b5b5"></rect><path d="M17 10.5 L23.5 6.5 V17.5 L17 13.5Z" fill="#b5b5b5"></path><path d="M0.5 23.5 L23.5 0.5" stroke="#1b1b1b" stroke-width="3"></path><path d="M0.5 23.5 L23.5 0.5" stroke="#f06262" stroke-width="2"></path></svg>
<div class="t fit" style="left: 109px; top: 880.75px; font-size: 12.7px; color: rgb(212, 212, 212); --w: 59; transform: scaleX(0.943293);">Start Video</div>
<svg style="left:171.5px;top:862px" width="9" height="5" viewBox="0 0 9 5"><path d="M0.8 4.5 L4.5 0.8 L8.2 4.5" stroke="#cfcfcf" stroke-width="1.3" fill="none"></path></svg>
<svg style="left:568px;top:855px" width="26" height="18" viewBox="0 0 26 18"><circle cx="8" cy="4.5" r="4.2" fill="#b5b5b5"></circle><path d="M0.5 17.5 C0.5 12 3.5 10 8 10 C12.5 10 15.5 12 15.5 17.5Z" fill="#b5b5b5"></path><circle cx="19" cy="6" r="3.6" fill="#b5b5b5"></circle><path d="M14 17.5 C14 13 16 11.5 19 11.5 C22.5 11.5 25.5 13 25.5 17.5Z" fill="#b5b5b5"></path></svg>
<div class="t fit" style="left: 597px; top: 855.72px; font-size: 12.5px; color: rgb(212, 212, 212); --w: 13.5; transform: scaleX(0.970787);">93</div>
<div class="t fit" style="left: 550.5px; top: 880.75px; font-size: 12.7px; color: rgb(212, 212, 212); --w: 61.5; transform: scaleX(0.927646);">Participants</div>
<svg style="left:629.5px;top:862px" width="9" height="5" viewBox="0 0 9 5"><path d="M0.8 4.5 L4.5 0.8 L8.2 4.5" stroke="#cfcfcf" stroke-width="1.3" fill="none"></path></svg>
<svg style="left:680px;top:855px" width="22" height="18" viewBox="0 0 22 18"><path d="M2 0.5 H19 C20.5 0.5 21.5 1.5 21.5 3 V11.5 C21.5 13 20.5 14 19 14 H8 L4 18 V14 H2 C0.8 14 0.5 13 0.5 11.5 V3 C0.5 1.5 0.8 0.5 2 0.5Z" fill="#b5b5b5"></path></svg>
<div class="a" style="left:694.5px;top:849.5px;width:21px;height:14.3px;background:#e0292f;border-radius:7px;border:1.5px solid #1b1b1b"></div>
<div class="t fit" style="left: 699.3px; top: 852.11px; font-size: 10.5px; color: rgb(255, 255, 255); font-weight: 700; --w: 11.5; transform: scaleX(0.983957);">14</div>
<div class="t fit" style="left: 679.3px; top: 880.75px; font-size: 12.7px; color: rgb(212, 212, 212); --w: 23.7; transform: scaleX(0.883916);">Chat</div>
<svg style="left:719.5px;top:862px" width="9" height="5" viewBox="0 0 9 5"><path d="M0.8 4.5 L4.5 0.8 L8.2 4.5" stroke="#cfcfcf" stroke-width="1.3" fill="none"></path></svg>
<div class="a" style="left:773px;top:855px;width:24px;height:18px;background:#22d156;border-radius:3px"></div>
<svg style="left:780px;top:858px" width="10" height="12" viewBox="0 0 10 12"><path d="M5 11.5 V2 M1 5.5 L5 1.5 L9 5.5" stroke="#111" stroke-width="2" fill="none"></path></svg>
<div class="t fit" style="left: 750px; top: 880.75px; font-size: 12.7px; color: rgb(46, 213, 103); --w: 68.7; transform: scaleX(0.885381);">Share Screen</div>
<svg style="left:863.5px;top:853.5px" width="21" height="21" viewBox="0 0 21 21"><circle cx="10.5" cy="10.5" r="9.3" fill="none" stroke="#b5b5b5" stroke-width="1.6"></circle><circle cx="10.5" cy="10.5" r="7" fill="#b5b5b5"></circle></svg>
<div class="t fit" style="left: 855px; top: 880.75px; font-size: 12.7px; color: rgb(212, 212, 212); --w: 36.7; transform: scaleX(0.897173);">Record</div>
<svg style="left:944px;top:852px" width="23" height="22" viewBox="0 0 23 22"><circle cx="9.5" cy="12" r="9" fill="#b5b5b5"></circle><circle cx="6.5" cy="10" r="1.1" fill="#1b1b1b"></circle><circle cx="12.5" cy="10" r="1.1" fill="#1b1b1b"></circle><path d="M5.5 13.5 C7 16.5 12 16.5 13.5 13.5" stroke="#1b1b1b" stroke-width="1.3" fill="none"></path><path d="M15 3 H22 M18.5 0 V6.5" stroke="#1b1b1b" stroke-width="3"></path><path d="M15.5 3.2 H21.5 M18.5 0.2 V6.2" stroke="#b5b5b5" stroke-width="1.5"></path></svg>
<div class="t fit" style="left: 928px; top: 880.75px; font-size: 12.7px; color: rgb(212, 212, 212); --w: 51; transform: scaleX(0.903905);">Reactions</div>
<svg style="left:1025px;top:856px" width="18" height="18" viewBox="0 0 18 18"><path d="M1 8 V4 C1 2.3 2.3 1 4 1 H8 M10 17 H14 C15.7 17 17 15.7 17 14 V10" stroke="#b5b5b5" stroke-width="1.6" fill="none"></path><circle cx="14" cy="4" r="2.5" fill="none" stroke="#b5b5b5" stroke-width="1.6"></circle><circle cx="4" cy="14" r="2.5" fill="none" stroke="#b5b5b5" stroke-width="1.6"></circle></svg>
<div class="t fit" style="left: 1020px; top: 880.75px; font-size: 12.7px; color: rgb(212, 212, 212); --w: 27; transform: scaleX(0.933549);">Apps</div>
<svg style="left:1113px;top:855px" width="21" height="17" viewBox="0 0 21 17"><path d="M9 15 H3 C1.6 15 0.8 14.2 0.8 12.8 V3 C0.8 1.6 1.6 0.8 3 0.8 H17.5 C18.9 0.8 19.7 1.6 19.7 3 V10" stroke="#b5b5b5" stroke-width="1.6" fill="none"></path><rect x="9.5" y="12" width="10.5" height="4" rx="2" fill="#b5b5b5"></rect></svg>
<div class="t fit" style="left: 1089.3px; top: 880.75px; font-size: 12.7px; color: rgb(212, 212, 212); --w: 67.7; transform: scaleX(0.950384);">Whiteboards</div>
<div class="a" style="left:1527px;top:860px;width:61px;height:27px;background:#b9262b;border-radius:7px"></div>
<div class="t fit" style="left: 1540.5px; top: 867.92px; font-size: 12.5px; color: rgb(255, 255, 255); font-weight: 700; --w: 32.5; transform: scaleX(0.916703);">Leave</div>
<div class="a" style="left:563px;top:665px;width:256px;height:166px;background:#232323;box-shadow:0 1px 4px rgba(0,0,0,.18)"></div>
<svg style="left:681px;top:830px" width="20" height="10" viewBox="0 0 20 10"><path d="M0 0 H20 L10 10Z" fill="#232323"></path></svg>
<div class="a" style="left:580px;top:681px;width:27px;height:27px;border-radius:8px;overflow:hidden;background:#2a2d31"><div class="a" style="left:0;top:8px;width:8px;height:14px;background:#4a5058;filter:blur(1px)"></div><div class="a" style="left:3px;top:0;width:22px;height:24px;border-radius:8px;background:#121212;filter:blur(.6px)"></div><div class="a" style="left:7px;top:6px;width:10px;height:15px;border-radius:45%;background:#8e8e8e;filter:blur(.9px);transform:rotate(-15deg)"></div><div class="a" style="left:13px;top:3px;width:9px;height:20px;border-radius:4px;background:#161616;filter:blur(.7px)"></div><div class="a" style="left:2px;top:20px;width:10px;height:7px;border-radius:4px;background:#6a6a6a;filter:blur(1px)"></div><div class="a" style="left:16px;top:21px;width:9px;height:6px;border-radius:4px;background:#8a8a8a;filter:blur(1px)"></div></div><svg style="left:802px;top:674px" width="8" height="8" viewBox="0 0 8 8"><path d="M0.5 0.5 L7.5 7.5 M7.5 0.5 L0.5 7.5" stroke="#bbb" stroke-width="1.2"></path></svg>
<div class="t fit" style="left: 624px; top: 683.68px; font-size: 12.9px; color: rgb(255, 255, 255); font-weight: 700; --w: 155; transform: scaleX(1.0314);">From Лiза Шпак 11-гр to</div>
<div class="t fit" style="left: 624px; top: 701.68px; font-size: 12.9px; color: rgb(255, 255, 255); font-weight: 700; --w: 56; transform: scaleX(0.964738);">Everyone</div>
<div class="t fit" style="left: 622.2px; top: 732.44px; font-size: 12px; color: rgb(244, 244, 244); --w: 74.5; transform: scaleX(1.08093);">Місто Умань</div>
<div class="t fit" style="left: 622.2px; top: 749.84px; font-size: 12px; color: rgb(244, 244, 244); --w: 147.8; transform: scaleX(1.06343);">Уманський національний</div>
<div class="t fit" style="left: 622.2px; top: 767.14px; font-size: 12px; color: rgb(244, 244, 244); --w: 147; transform: scaleX(1.03875);">університет Садівництва,</div>
<div class="t fit" style="left: 622.2px; top: 783.64px; font-size: 12px; color: rgb(244, 244, 244); --w: 137; transform: scaleX(1.08649);">менеджмент готельно-</div>
<div class="t fit" style="left: 622.2px; top: 800.54px; font-size: 12px; color: rgb(244, 244, 244); --w: 115.3; transform: scaleX(1.07994);">ресторанна справа</div>
<!--/ZOOMUI-->
<!--NEXT-->


</body></html>
